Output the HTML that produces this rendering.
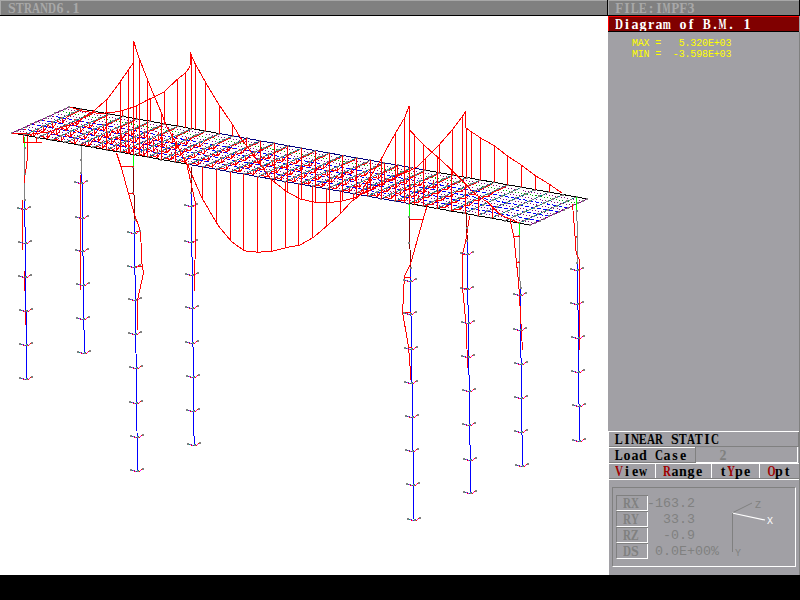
<!DOCTYPE html>
<html><head><meta charset="utf-8">
<style>
html,body{margin:0;padding:0;width:800px;height:600px;overflow:hidden;background:#fff;}
body{position:relative;font-family:"Liberation Mono",monospace;}
.a{position:absolute;box-sizing:border-box;}
.t{position:absolute;white-space:pre;line-height:1;height:16px;}
.t span{display:inline-flex;justify-content:center;width:8px;}
.t b{display:inline-block;font-weight:inherit;}
.s{font-family:"Liberation Serif",serif;font-weight:bold;font-size:14px;}
.m{font-family:"Liberation Mono",monospace;font-size:13.33px;}
svg{position:absolute;left:0;top:0;}
</style></head><body>
<!-- title bar -->
<div class="a" style="left:0;top:0;width:607px;height:15px;background:#808080;border-top:1px solid #a8a8a8;border-left:1px solid #a8a8a8;"></div>
<div class="a" style="left:607px;top:0;width:1px;height:16px;background:#000;"></div>
<div class="a" style="left:608px;top:0;width:191px;height:15px;background:#808080;border-top:1px solid #a8a8a8;border-left:1px solid #a8a8a8;"></div>
<div class="a" style="left:799px;top:0;width:1px;height:32px;background:#000;"></div>
<div class="a" style="left:0;top:15px;width:800px;height:1px;background:#000;"></div>
<!-- right panel -->
<div class="a" style="left:608px;top:16px;width:192px;height:559px;background:#a1a0a5;"></div>
<div class="a" style="left:608px;top:16px;width:191px;height:16px;background:#800000;border-top:1px solid #ff0000;border-left:1px solid #ff0000;border-bottom:1px solid #000;"></div>
<div class="a" style="left:799px;top:32px;width:1px;height:543px;background:#808080;"></div>
<!-- buttons -->
<div class="a" style="left:608px;top:431px;width:191px;height:1px;background:#fff;"></div>
<div class="a" style="left:608px;top:431px;width:1px;height:144px;background:#fff;"></div>
<div class="a" style="left:609px;top:446px;width:190px;height:1px;background:#808080;"></div>
<div class="a" style="left:798px;top:432px;width:1px;height:15px;background:#808080;"></div>
<div class="a" style="left:609px;top:447px;width:86px;height:1px;background:#fff;"></div>
<div class="a" style="left:695px;top:447px;width:1px;height:16px;background:#808080;"></div>
<div class="a" style="left:609px;top:462px;width:86px;height:1px;background:#808080;"></div>
<div class="a" style="left:696px;top:462px;width:102px;height:1px;background:#fff;"></div>
<div class="a" style="left:797px;top:447px;width:1px;height:16px;background:#fff;"></div>
<div class="a" style="left:609px;top:463px;width:190px;height:1px;background:#fff;"></div>
<div class="a" style="left:655px;top:464px;width:1px;height:14px;background:#fff;"></div>
<div class="a" style="left:711px;top:464px;width:1px;height:14px;background:#fff;"></div>
<div class="a" style="left:759px;top:464px;width:1px;height:14px;background:#fff;"></div>
<div class="a" style="left:609px;top:478px;width:190px;height:1px;background:#808080;"></div>
<div class="a" style="left:609px;top:479px;width:190px;height:1px;background:#fff;"></div>
<!-- lower frame -->
<div class="a" style="left:612px;top:487px;width:184px;height:80px;border-top:1px solid #808080;border-left:1px solid #808080;border-right:1px solid #fff;border-bottom:1px solid #fff;"></div>
<div class="a" style="left:616px;top:495px;width:32px;height:64px;border-right:1px solid #fff;"></div>
<div class="a" style="left:616px;top:495px;width:32px;height:16px;border-top:1px solid #808080;border-left:1px solid #808080;border-bottom:1px solid #fff;"></div>
<div class="a" style="left:616px;top:511px;width:32px;height:16px;border-top:1px solid #808080;border-left:1px solid #808080;border-bottom:1px solid #fff;"></div>
<div class="a" style="left:616px;top:527px;width:32px;height:16px;border-top:1px solid #808080;border-left:1px solid #808080;border-bottom:1px solid #fff;"></div>
<div class="a" style="left:616px;top:543px;width:32px;height:16px;border-top:1px solid #808080;border-left:1px solid #808080;border-bottom:1px solid #fff;"></div>
<svg width="800" height="600" style="pointer-events:none">
<line x1="732" y1="513" x2="752" y2="503" stroke="#808080" stroke-width="1"/>
<line x1="732" y1="513" x2="765" y2="520" stroke="#fff" stroke-width="1.2"/>
<line x1="732.5" y1="513" x2="732.5" y2="552" stroke="#808080" stroke-width="1"/>
</svg>
<div class="t s" style="left:8px;top:2px;color:#a8a8a8;"><span>S</span><span><b style="transform:scaleX(0.856)">T</b></span><span><b style="transform:scaleX(0.791)">R</b></span><span><b style="transform:scaleX(0.791)">A</b></span><span><b style="transform:scaleX(0.791)">N</b></span><span><b style="transform:scaleX(0.791)">D</b></span><span>6</span><span>.</span><span>1</span></div>
<div class="t s" style="left:615px;top:2px;color:#a8a8a8;"><span><b style="transform:scaleX(0.936)">F</b></span><span>I</span><span><b style="transform:scaleX(0.856)">L</b></span><span><b style="transform:scaleX(0.856)">E</b></span><span>:</span><span>I</span><span><b style="transform:scaleX(0.605)">M</b></span><span><b style="transform:scaleX(0.936)">P</b></span><span><b style="transform:scaleX(0.936)">F</b></span><span>3</span></div>
<div class="t s" style="left:615px;top:18px;color:#ffffff;"><span><b style="transform:scaleX(0.791)">D</b></span><span>i</span><span>a</span><span>g</span><span>r</span><span>a</span><span><b style="transform:scaleX(0.686)">m</b></span><span>&nbsp;</span><span>o</span><span>f</span><span>&nbsp;</span><span><b style="transform:scaleX(0.856)">B</b></span><span>.</span><span><b style="transform:scaleX(0.605)">M</b></span><span>.</span><span>&nbsp;</span><span>1</span></div>
<div class="t m" style="left:632px;top:39px;color:#ffff00;font-size:10px;"><span style="width:5.85px;">M</span><span style="width:5.85px;">A</span><span style="width:5.85px;">X</span><span style="width:5.85px;">&nbsp;</span><span style="width:5.85px;">=</span><span style="width:5.85px;">&nbsp;</span><span style="width:5.85px;">&nbsp;</span><span style="width:5.85px;">&nbsp;</span><span style="width:5.85px;">5</span><span style="width:5.85px;">.</span><span style="width:5.85px;">3</span><span style="width:5.85px;">2</span><span style="width:5.85px;">0</span><span style="width:5.85px;">E</span><span style="width:5.85px;">+</span><span style="width:5.85px;">0</span><span style="width:5.85px;">3</span></div>
<div class="t m" style="left:632px;top:50px;color:#ffff00;font-size:10px;"><span style="width:5.85px;">M</span><span style="width:5.85px;">I</span><span style="width:5.85px;">N</span><span style="width:5.85px;">&nbsp;</span><span style="width:5.85px;">=</span><span style="width:5.85px;">&nbsp;</span><span style="width:5.85px;">&nbsp;</span><span style="width:5.85px;">-</span><span style="width:5.85px;">3</span><span style="width:5.85px;">.</span><span style="width:5.85px;">5</span><span style="width:5.85px;">9</span><span style="width:5.85px;">8</span><span style="width:5.85px;">E</span><span style="width:5.85px;">+</span><span style="width:5.85px;">0</span><span style="width:5.85px;">3</span></div>
<div class="t s" style="left:615px;top:433px;color:#000000;"><span><b style="transform:scaleX(0.856)">L</b></span><span>I</span><span><b style="transform:scaleX(0.791)">N</b></span><span><b style="transform:scaleX(0.856)">E</b></span><span><b style="transform:scaleX(0.791)">A</b></span><span><b style="transform:scaleX(0.791)">R</b></span><span>&nbsp;</span><span>S</span><span><b style="transform:scaleX(0.856)">T</b></span><span><b style="transform:scaleX(0.791)">A</b></span><span><b style="transform:scaleX(0.856)">T</b></span><span>I</span><span><b style="transform:scaleX(0.791)">C</b></span></div>
<div class="t s" style="left:615px;top:449px;color:#000000;"><span><b style="transform:scaleX(0.856)">L</b></span><span>o</span><span>a</span><span>d</span><span>&nbsp;</span><span><b style="transform:scaleX(0.791)">C</b></span><span>a</span><span>s</span><span>e</span></div>
<div class="t s" style="left:719px;top:449px;color:#808080;"><span>2</span></div>
<div class="t s" style="left:615px;top:465px;color:#000000;"><span style="color:#a00000;"><b style="transform:scaleX(0.791)">V</b></span><span>i</span><span>e</span><span><b style="transform:scaleX(0.791)">w</b></span></div>
<div class="t s" style="left:663px;top:465px;color:#000000;"><span style="color:#a00000;"><b style="transform:scaleX(0.791)">R</b></span><span>a</span><span>n</span><span>g</span><span>e</span></div>
<div class="t s" style="left:719px;top:465px;color:#000000;"><span>t</span><span style="color:#a00000;"><b style="transform:scaleX(0.791)">Y</b></span><span>p</span><span>e</span></div>
<div class="t s" style="left:767px;top:465px;color:#000000;"><span style="color:#a00000;"><b style="transform:scaleX(0.735)">O</b></span><span>p</span><span>t</span></div>
<div class="t s" style="left:623px;top:497px;color:#808080;"><span><b style="transform:scaleX(0.791)">R</b></span><span><b style="transform:scaleX(0.791)">X</b></span></div>
<div class="t s" style="left:623px;top:513px;color:#808080;"><span><b style="transform:scaleX(0.791)">R</b></span><span><b style="transform:scaleX(0.791)">Y</b></span></div>
<div class="t s" style="left:623px;top:529px;color:#808080;"><span><b style="transform:scaleX(0.791)">R</b></span><span><b style="transform:scaleX(0.856)">Z</b></span></div>
<div class="t s" style="left:623px;top:545px;color:#808080;"><span><b style="transform:scaleX(0.791)">D</b></span><span>S</span></div>
<div class="t m" style="left:647px;top:497px;color:#808080;"><span>-</span><span>1</span><span>6</span><span>3</span><span>.</span><span>2</span></div>
<div class="t m" style="left:647px;top:513px;color:#808080;"><span>&nbsp;</span><span>&nbsp;</span><span>3</span><span>3</span><span>.</span><span>3</span></div>
<div class="t m" style="left:647px;top:529px;color:#808080;"><span>&nbsp;</span><span>&nbsp;</span><span>-</span><span>0</span><span>.</span><span>9</span></div>
<div class="t m" style="left:655px;top:545px;color:#808080;"><span>0</span><span>.</span><span>0</span><span>E</span><span>+</span><span>0</span><span>0</span><span>%</span></div>
<div class="t m" style="left:755px;top:501px;font-size:10px;color:#808080">Z</div>
<div class="t m" style="left:767px;top:517px;font-size:10px;color:#ffffff">X</div>
<div class="t m" style="left:735px;top:549px;font-size:10px;color:#808080">Y</div>
<div class="a" style="left:608px;top:31px;width:191px;height:1px;background:#000;"></div>
<!-- bottom black -->
<div class="a" style="left:0;top:575px;width:800px;height:25px;background:#000;"></div>
<!-- drawing -->
<svg width="607" height="575" viewBox="0 0 607 575" style="left:0;top:0;" shape-rendering="crispEdges">
<line x1="16.8" y1="130.8" x2="534.8" y2="222.8" stroke="#800080" stroke-width="1" stroke-dasharray="1 2"/>
<line x1="26.4" y1="126.5" x2="544.4" y2="218.5" stroke="#800080" stroke-width="1" stroke-dasharray="1 2"/>
<line x1="36.0" y1="122.2" x2="554.0" y2="214.2" stroke="#800080" stroke-width="1" stroke-dasharray="1 2"/>
<line x1="45.5" y1="117.8" x2="563.5" y2="209.8" stroke="#800080" stroke-width="1" stroke-dasharray="1 2"/>
<line x1="55.1" y1="113.5" x2="573.1" y2="205.5" stroke="#800080" stroke-width="1" stroke-dasharray="1 2"/>
<line x1="59.9" y1="111.3" x2="577.9" y2="203.3" stroke="#00a000" stroke-width="1" stroke-dasharray="1 2"/>
<line x1="64.7" y1="109.2" x2="582.7" y2="201.2" stroke="#800080" stroke-width="1" stroke-dasharray="1 2"/>
<line x1="33.6" y1="130.8" x2="33.6" y2="136.8" stroke="#ff0000" stroke-width="1" />
<line x1="43.2" y1="126.5" x2="43.2" y2="132.5" stroke="#ff0000" stroke-width="1" />
<line x1="52.8" y1="122.1" x2="52.8" y2="128.1" stroke="#ff0000" stroke-width="1" />
<line x1="62.3" y1="117.8" x2="62.3" y2="123.8" stroke="#ff0000" stroke-width="1" />
<polyline points="24.0,135.1 28.8,134.0 33.6,136.8 38.4,129.6 43.2,132.5 48.0,125.3 52.8,128.1 57.5,121.0 62.3,123.8 67.1,116.6 71.9,114.5 76.7,112.3 81.5,109.1" fill="none" stroke="#ff0000" stroke-width="1" />
<line x1="47.3" y1="133.2" x2="47.3" y2="139.2" stroke="#ff0000" stroke-width="1" />
<line x1="56.9" y1="128.9" x2="56.9" y2="134.9" stroke="#ff0000" stroke-width="1" />
<line x1="66.5" y1="124.6" x2="66.5" y2="130.6" stroke="#ff0000" stroke-width="1" />
<line x1="76.1" y1="120.2" x2="76.1" y2="126.2" stroke="#ff0000" stroke-width="1" />
<polyline points="37.8,137.6 42.5,136.4 47.3,139.2 52.1,132.1 56.9,134.9 61.7,127.7 66.5,130.6 71.3,123.4 76.1,126.2 80.9,119.1 85.7,116.9 90.5,114.7 95.2,111.6" fill="none" stroke="#ff0000" stroke-width="1" />
<line x1="61.1" y1="135.7" x2="61.1" y2="141.7" stroke="#ff0000" stroke-width="1" />
<line x1="70.7" y1="131.3" x2="70.7" y2="137.3" stroke="#ff0000" stroke-width="1" />
<line x1="80.2" y1="127.0" x2="80.2" y2="133.0" stroke="#ff0000" stroke-width="1" />
<line x1="89.8" y1="122.7" x2="89.8" y2="128.7" stroke="#ff0000" stroke-width="1" />
<polyline points="51.5,140.0 56.3,138.8 61.1,141.7 65.9,134.5 70.7,137.3 75.5,130.2 80.2,133.0 85.0,125.8 89.8,128.7 94.6,121.5 99.4,119.3 104.2,117.2 109.0,114.0" fill="none" stroke="#ff0000" stroke-width="1" />
<line x1="74.8" y1="138.1" x2="74.8" y2="144.1" stroke="#ff0000" stroke-width="1" />
<line x1="84.4" y1="133.8" x2="84.4" y2="139.8" stroke="#ff0000" stroke-width="1" />
<line x1="94.0" y1="129.5" x2="94.0" y2="135.5" stroke="#ff0000" stroke-width="1" />
<line x1="103.6" y1="125.1" x2="103.6" y2="131.1" stroke="#ff0000" stroke-width="1" />
<polyline points="65.2,142.5 70.0,141.3 74.8,144.1 79.6,137.0 84.4,139.8 89.2,132.6 94.0,135.5 98.8,128.3 103.6,131.1 108.4,124.0 113.2,121.8 118.0,119.6 122.8,116.5" fill="none" stroke="#ff0000" stroke-width="1" />
<line x1="88.6" y1="140.6" x2="88.6" y2="146.6" stroke="#ff0000" stroke-width="1" />
<line x1="98.2" y1="136.2" x2="98.2" y2="142.2" stroke="#ff0000" stroke-width="1" />
<line x1="107.8" y1="131.9" x2="107.8" y2="137.9" stroke="#ff0000" stroke-width="1" />
<line x1="117.3" y1="127.6" x2="117.3" y2="133.6" stroke="#ff0000" stroke-width="1" />
<polyline points="79.0,144.9 83.8,143.7 88.6,146.6 93.4,139.4 98.2,142.2 103.0,135.1 107.8,137.9 112.5,130.7 117.3,133.6 122.1,126.4 126.9,124.2 131.7,122.1 136.5,118.9" fill="none" stroke="#ff0000" stroke-width="1" />
<line x1="102.3" y1="143.0" x2="102.3" y2="149.0" stroke="#ff0000" stroke-width="1" />
<line x1="111.9" y1="138.7" x2="111.9" y2="144.7" stroke="#ff0000" stroke-width="1" />
<line x1="121.5" y1="134.3" x2="121.5" y2="140.3" stroke="#ff0000" stroke-width="1" />
<line x1="131.1" y1="130.0" x2="131.1" y2="136.0" stroke="#ff0000" stroke-width="1" />
<polyline points="92.8,147.3 97.5,146.2 102.3,149.0 107.1,141.8 111.9,144.7 116.7,137.5 121.5,140.3 126.3,133.2 131.1,136.0 135.9,128.8 140.7,126.7 145.5,124.5 150.2,121.3" fill="none" stroke="#ff0000" stroke-width="1" />
<line x1="116.1" y1="145.5" x2="116.1" y2="151.5" stroke="#ff0000" stroke-width="1" />
<line x1="125.7" y1="141.1" x2="125.7" y2="147.1" stroke="#ff0000" stroke-width="1" />
<line x1="135.2" y1="136.8" x2="135.2" y2="142.8" stroke="#ff0000" stroke-width="1" />
<line x1="144.8" y1="132.5" x2="144.8" y2="138.5" stroke="#ff0000" stroke-width="1" />
<polyline points="106.5,149.8 111.3,148.6 116.1,151.5 120.9,144.3 125.7,147.1 130.5,140.0 135.2,142.8 140.0,135.6 144.8,138.5 149.6,131.3 154.4,129.1 159.2,127.0 164.0,123.8" fill="none" stroke="#ff0000" stroke-width="1" />
<line x1="129.8" y1="147.9" x2="129.8" y2="153.9" stroke="#ff0000" stroke-width="1" />
<line x1="139.4" y1="143.6" x2="139.4" y2="149.6" stroke="#ff0000" stroke-width="1" />
<line x1="149.0" y1="139.2" x2="149.0" y2="145.2" stroke="#ff0000" stroke-width="1" />
<line x1="158.6" y1="134.9" x2="158.6" y2="140.9" stroke="#ff0000" stroke-width="1" />
<polyline points="120.2,152.2 125.0,151.1 129.8,153.9 134.6,146.7 139.4,149.6 144.2,142.4 149.0,145.2 153.8,138.1 158.6,140.9 163.4,133.7 168.2,131.6 173.0,129.4 177.8,126.2" fill="none" stroke="#ff0000" stroke-width="1" />
<line x1="143.6" y1="150.3" x2="143.6" y2="156.3" stroke="#ff0000" stroke-width="1" />
<line x1="153.2" y1="146.0" x2="153.2" y2="152.0" stroke="#ff0000" stroke-width="1" />
<line x1="162.8" y1="141.7" x2="162.8" y2="147.7" stroke="#ff0000" stroke-width="1" />
<line x1="172.3" y1="137.3" x2="172.3" y2="143.3" stroke="#ff0000" stroke-width="1" />
<polyline points="134.0,154.7 138.8,153.5 143.6,156.3 148.4,149.2 153.2,152.0 158.0,144.8 162.8,147.7 167.5,140.5 172.3,143.3 177.1,136.2 181.9,134.0 186.7,131.8 191.5,128.7" fill="none" stroke="#ff0000" stroke-width="1" />
<line x1="157.3" y1="152.8" x2="157.3" y2="157.3" stroke="#ff0000" stroke-width="1" />
<line x1="166.9" y1="148.4" x2="166.9" y2="152.9" stroke="#ff0000" stroke-width="1" />
<line x1="176.5" y1="144.1" x2="176.5" y2="148.6" stroke="#ff0000" stroke-width="1" />
<line x1="186.1" y1="139.8" x2="186.1" y2="144.3" stroke="#ff0000" stroke-width="1" />
<polyline points="147.8,157.1 152.5,155.9 157.3,157.3 162.1,151.6 166.9,152.9 171.7,147.3 176.5,148.6 181.3,142.9 186.1,144.3 190.9,138.6 195.7,136.4 200.5,134.3 205.2,131.1" fill="none" stroke="#ff0000" stroke-width="1" />
<line x1="171.1" y1="155.2" x2="171.1" y2="159.7" stroke="#ff0000" stroke-width="1" />
<line x1="180.7" y1="150.9" x2="180.7" y2="155.4" stroke="#ff0000" stroke-width="1" />
<line x1="190.2" y1="146.6" x2="190.2" y2="151.1" stroke="#ff0000" stroke-width="1" />
<line x1="199.8" y1="142.2" x2="199.8" y2="146.7" stroke="#ff0000" stroke-width="1" />
<polyline points="161.5,159.6 166.3,158.4 171.1,159.7 175.9,154.1 180.7,155.4 185.5,149.7 190.2,151.1 195.0,145.4 199.8,146.7 204.6,141.1 209.4,138.9 214.2,136.7 219.0,133.6" fill="none" stroke="#ff0000" stroke-width="1" />
<line x1="184.8" y1="157.7" x2="184.8" y2="162.2" stroke="#ff0000" stroke-width="1" />
<line x1="194.4" y1="153.3" x2="194.4" y2="157.8" stroke="#ff0000" stroke-width="1" />
<line x1="204.0" y1="149.0" x2="204.0" y2="153.5" stroke="#ff0000" stroke-width="1" />
<line x1="213.6" y1="144.7" x2="213.6" y2="149.2" stroke="#ff0000" stroke-width="1" />
<polyline points="175.2,162.0 180.0,160.8 184.8,162.2 189.6,156.5 194.4,157.8 199.2,152.2 204.0,153.5 208.8,147.8 213.6,149.2 218.4,143.5 223.2,141.3 228.0,139.2 232.8,136.0" fill="none" stroke="#ff0000" stroke-width="1" />
<line x1="198.6" y1="160.1" x2="198.6" y2="164.6" stroke="#ff0000" stroke-width="1" />
<line x1="208.2" y1="155.8" x2="208.2" y2="160.3" stroke="#ff0000" stroke-width="1" />
<line x1="217.8" y1="151.4" x2="217.8" y2="155.9" stroke="#ff0000" stroke-width="1" />
<line x1="227.3" y1="147.1" x2="227.3" y2="151.6" stroke="#ff0000" stroke-width="1" />
<polyline points="189.0,164.4 193.8,163.3 198.6,164.6 203.4,158.9 208.2,160.3 213.0,154.6 217.8,155.9 222.5,150.3 227.3,151.6 232.1,145.9 236.9,143.8 241.7,141.6 246.5,138.4" fill="none" stroke="#ff0000" stroke-width="1" />
<line x1="212.3" y1="162.5" x2="212.3" y2="167.0" stroke="#ff0000" stroke-width="1" />
<line x1="221.9" y1="158.2" x2="221.9" y2="162.7" stroke="#ff0000" stroke-width="1" />
<line x1="231.5" y1="153.9" x2="231.5" y2="158.4" stroke="#ff0000" stroke-width="1" />
<line x1="241.1" y1="149.5" x2="241.1" y2="154.0" stroke="#ff0000" stroke-width="1" />
<polyline points="202.8,166.9 207.5,165.7 212.3,167.0 217.1,161.4 221.9,162.7 226.7,157.0 231.5,158.4 236.3,152.7 241.1,154.0 245.9,148.4 250.7,146.2 255.5,144.0 260.2,140.9" fill="none" stroke="#ff0000" stroke-width="1" />
<line x1="226.1" y1="165.0" x2="226.1" y2="169.5" stroke="#ff0000" stroke-width="1" />
<line x1="235.7" y1="160.7" x2="235.7" y2="165.2" stroke="#ff0000" stroke-width="1" />
<line x1="245.2" y1="156.3" x2="245.2" y2="160.8" stroke="#ff0000" stroke-width="1" />
<line x1="254.8" y1="152.0" x2="254.8" y2="156.5" stroke="#ff0000" stroke-width="1" />
<polyline points="216.5,169.3 221.3,168.2 226.1,169.5 230.9,163.8 235.7,165.2 240.5,159.5 245.2,160.8 250.0,155.2 254.8,156.5 259.6,150.8 264.4,148.7 269.2,146.5 274.0,143.3" fill="none" stroke="#ff0000" stroke-width="1" />
<line x1="239.8" y1="167.4" x2="239.8" y2="171.9" stroke="#ff0000" stroke-width="1" />
<line x1="249.4" y1="163.1" x2="249.4" y2="167.6" stroke="#ff0000" stroke-width="1" />
<line x1="259.0" y1="158.8" x2="259.0" y2="163.3" stroke="#ff0000" stroke-width="1" />
<line x1="268.6" y1="154.4" x2="268.6" y2="158.9" stroke="#ff0000" stroke-width="1" />
<polyline points="230.2,171.8 235.0,170.6 239.8,171.9 244.6,166.3 249.4,167.6 254.2,161.9 259.0,163.3 263.8,157.6 268.6,158.9 273.4,153.3 278.2,151.1 283.0,148.9 287.8,145.8" fill="none" stroke="#ff0000" stroke-width="1" />
<line x1="253.6" y1="169.9" x2="253.6" y2="174.4" stroke="#ff0000" stroke-width="1" />
<line x1="263.2" y1="165.5" x2="263.2" y2="170.0" stroke="#ff0000" stroke-width="1" />
<line x1="272.8" y1="161.2" x2="272.8" y2="165.7" stroke="#ff0000" stroke-width="1" />
<line x1="282.3" y1="156.9" x2="282.3" y2="161.4" stroke="#ff0000" stroke-width="1" />
<polyline points="244.0,174.2 248.8,173.0 253.6,174.4 258.4,168.7 263.2,170.0 268.0,164.4 272.8,165.7 277.5,160.0 282.3,161.4 287.1,155.7 291.9,153.5 296.7,151.4 301.5,148.2" fill="none" stroke="#ff0000" stroke-width="1" />
<line x1="267.3" y1="172.3" x2="267.3" y2="176.8" stroke="#ff0000" stroke-width="1" />
<line x1="276.9" y1="168.0" x2="276.9" y2="172.5" stroke="#ff0000" stroke-width="1" />
<line x1="286.5" y1="163.6" x2="286.5" y2="168.1" stroke="#ff0000" stroke-width="1" />
<line x1="296.1" y1="159.3" x2="296.1" y2="163.8" stroke="#ff0000" stroke-width="1" />
<polyline points="257.8,176.6 262.5,175.5 267.3,176.8 272.1,171.1 276.9,172.5 281.7,166.8 286.5,168.1 291.3,162.5 296.1,163.8 300.9,158.1 305.7,156.0 310.5,153.8 315.2,150.6" fill="none" stroke="#ff0000" stroke-width="1" />
<line x1="281.1" y1="174.8" x2="281.1" y2="179.3" stroke="#ff0000" stroke-width="1" />
<line x1="290.7" y1="170.4" x2="290.7" y2="174.9" stroke="#ff0000" stroke-width="1" />
<line x1="300.2" y1="166.1" x2="300.2" y2="170.6" stroke="#ff0000" stroke-width="1" />
<line x1="309.8" y1="161.8" x2="309.8" y2="166.3" stroke="#ff0000" stroke-width="1" />
<polyline points="271.5,179.1 276.3,177.9 281.1,179.3 285.9,173.6 290.7,174.9 295.5,169.3 300.2,170.6 305.0,164.9 309.8,166.3 314.6,160.6 319.4,158.4 324.2,156.3 329.0,153.1" fill="none" stroke="#ff0000" stroke-width="1" />
<line x1="294.8" y1="177.2" x2="294.8" y2="181.7" stroke="#ff0000" stroke-width="1" />
<line x1="304.4" y1="172.9" x2="304.4" y2="177.4" stroke="#ff0000" stroke-width="1" />
<line x1="314.0" y1="168.5" x2="314.0" y2="173.0" stroke="#ff0000" stroke-width="1" />
<line x1="323.6" y1="164.2" x2="323.6" y2="168.7" stroke="#ff0000" stroke-width="1" />
<polyline points="285.2,181.5 290.0,180.4 294.8,181.7 299.6,176.0 304.4,177.4 309.2,171.7 314.0,173.0 318.8,167.4 323.6,168.7 328.4,163.0 333.2,160.9 338.0,158.7 342.8,155.5" fill="none" stroke="#ff0000" stroke-width="1" />
<line x1="308.6" y1="179.6" x2="308.6" y2="184.1" stroke="#ff0000" stroke-width="1" />
<line x1="318.2" y1="175.3" x2="318.2" y2="179.8" stroke="#ff0000" stroke-width="1" />
<line x1="327.8" y1="171.0" x2="327.8" y2="175.5" stroke="#ff0000" stroke-width="1" />
<line x1="337.3" y1="166.6" x2="337.3" y2="171.1" stroke="#ff0000" stroke-width="1" />
<polyline points="299.0,184.0 303.8,182.8 308.6,184.1 313.4,178.5 318.2,179.8 323.0,174.1 327.8,175.5 332.5,169.8 337.3,171.1 342.1,165.5 346.9,163.3 351.7,161.1 356.5,158.0" fill="none" stroke="#ff0000" stroke-width="1" />
<line x1="322.3" y1="182.1" x2="322.3" y2="186.6" stroke="#ff0000" stroke-width="1" />
<line x1="331.9" y1="177.7" x2="331.9" y2="182.2" stroke="#ff0000" stroke-width="1" />
<line x1="341.5" y1="173.4" x2="341.5" y2="177.9" stroke="#ff0000" stroke-width="1" />
<line x1="351.1" y1="169.1" x2="351.1" y2="173.6" stroke="#ff0000" stroke-width="1" />
<polyline points="312.8,186.4 317.5,185.2 322.3,186.6 327.1,180.9 331.9,182.2 336.7,176.6 341.5,177.9 346.3,172.2 351.1,173.6 355.9,167.9 360.7,165.7 365.5,163.6 370.2,160.4" fill="none" stroke="#ff0000" stroke-width="1" />
<line x1="336.1" y1="184.5" x2="336.1" y2="189.0" stroke="#ff0000" stroke-width="1" />
<line x1="345.7" y1="180.2" x2="345.7" y2="184.7" stroke="#ff0000" stroke-width="1" />
<line x1="355.2" y1="175.9" x2="355.2" y2="180.4" stroke="#ff0000" stroke-width="1" />
<line x1="364.8" y1="171.5" x2="364.8" y2="176.0" stroke="#ff0000" stroke-width="1" />
<polyline points="326.5,188.9 331.3,187.7 336.1,189.0 340.9,183.4 345.7,184.7 350.5,179.0 355.2,180.4 360.0,174.7 364.8,176.0 369.6,170.4 374.4,168.2 379.2,166.0 384.0,162.9" fill="none" stroke="#ff0000" stroke-width="1" />
<line x1="349.8" y1="187.0" x2="349.8" y2="191.5" stroke="#ff0000" stroke-width="1" />
<line x1="359.4" y1="182.6" x2="359.4" y2="187.1" stroke="#ff0000" stroke-width="1" />
<line x1="369.0" y1="178.3" x2="369.0" y2="182.8" stroke="#ff0000" stroke-width="1" />
<line x1="378.6" y1="174.0" x2="378.6" y2="178.5" stroke="#ff0000" stroke-width="1" />
<polyline points="340.2,191.3 345.0,190.1 349.8,191.5 354.6,185.8 359.4,187.1 364.2,181.5 369.0,182.8 373.8,177.1 378.6,178.5 383.4,172.8 388.2,170.6 393.0,168.5 397.8,165.3" fill="none" stroke="#ff0000" stroke-width="1" />
<line x1="363.6" y1="189.4" x2="363.6" y2="193.9" stroke="#ff0000" stroke-width="1" />
<line x1="373.2" y1="185.1" x2="373.2" y2="189.6" stroke="#ff0000" stroke-width="1" />
<line x1="382.8" y1="180.7" x2="382.8" y2="185.2" stroke="#ff0000" stroke-width="1" />
<line x1="392.3" y1="176.4" x2="392.3" y2="180.9" stroke="#ff0000" stroke-width="1" />
<polyline points="354.0,193.7 358.8,192.6 363.6,193.9 368.4,188.2 373.2,189.6 378.0,183.9 382.8,185.2 387.5,179.6 392.3,180.9 397.1,175.2 401.9,173.1 406.7,170.9 411.5,167.7" fill="none" stroke="#ff0000" stroke-width="1" />
<line x1="377.3" y1="191.9" x2="377.3" y2="196.4" stroke="#ff0000" stroke-width="1" />
<line x1="386.9" y1="187.5" x2="386.9" y2="192.0" stroke="#ff0000" stroke-width="1" />
<line x1="396.5" y1="183.2" x2="396.5" y2="187.7" stroke="#ff0000" stroke-width="1" />
<line x1="406.1" y1="178.9" x2="406.1" y2="183.4" stroke="#ff0000" stroke-width="1" />
<polyline points="367.8,196.2 372.5,195.0 377.3,196.4 382.1,190.7 386.9,192.0 391.7,186.4 396.5,187.7 401.3,182.0 406.1,183.4 410.9,177.7 415.7,175.5 420.5,173.4 425.2,170.2" fill="none" stroke="#ff0000" stroke-width="1" />
<line x1="391.1" y1="194.3" x2="391.1" y2="198.8" stroke="#ff0000" stroke-width="1" />
<line x1="400.7" y1="190.0" x2="400.7" y2="194.5" stroke="#ff0000" stroke-width="1" />
<line x1="410.2" y1="185.6" x2="410.2" y2="190.1" stroke="#ff0000" stroke-width="1" />
<line x1="419.8" y1="181.3" x2="419.8" y2="185.8" stroke="#ff0000" stroke-width="1" />
<polyline points="381.5,198.6 386.3,197.5 391.1,198.8 395.9,193.1 400.7,194.5 405.5,188.8 410.2,190.1 415.0,184.5 419.8,185.8 424.6,180.1 429.4,178.0 434.2,175.8 439.0,172.6" fill="none" stroke="#ff0000" stroke-width="1" />
<line x1="404.8" y1="196.7" x2="404.8" y2="201.2" stroke="#ff0000" stroke-width="1" />
<line x1="414.4" y1="192.4" x2="414.4" y2="196.9" stroke="#ff0000" stroke-width="1" />
<line x1="424.0" y1="188.1" x2="424.0" y2="192.6" stroke="#ff0000" stroke-width="1" />
<line x1="433.6" y1="183.7" x2="433.6" y2="188.2" stroke="#ff0000" stroke-width="1" />
<polyline points="395.2,201.1 400.0,199.9 404.8,201.2 409.6,195.6 414.4,196.9 419.2,191.2 424.0,192.6 428.8,186.9 433.6,188.2 438.4,182.6 443.2,180.4 448.0,178.2 452.8,175.1" fill="none" stroke="#ff0000" stroke-width="1" />
<line x1="418.6" y1="199.2" x2="418.6" y2="202.2" stroke="#ff0000" stroke-width="1" />
<line x1="428.2" y1="194.8" x2="428.2" y2="197.8" stroke="#ff0000" stroke-width="1" />
<line x1="437.8" y1="190.5" x2="437.8" y2="193.5" stroke="#ff0000" stroke-width="1" />
<line x1="447.3" y1="186.2" x2="447.3" y2="189.2" stroke="#ff0000" stroke-width="1" />
<polyline points="409.0,203.5 413.8,202.3 418.6,202.2 423.4,198.0 428.2,197.8 433.0,193.7 437.8,193.5 442.5,189.3 447.3,189.2 452.1,185.0 456.9,182.8 461.7,180.7 466.5,177.5" fill="none" stroke="#ff0000" stroke-width="1" />
<line x1="432.3" y1="201.6" x2="432.3" y2="204.6" stroke="#ff0000" stroke-width="1" />
<line x1="441.9" y1="197.3" x2="441.9" y2="200.3" stroke="#ff0000" stroke-width="1" />
<line x1="451.5" y1="193.0" x2="451.5" y2="196.0" stroke="#ff0000" stroke-width="1" />
<line x1="461.1" y1="188.6" x2="461.1" y2="191.6" stroke="#ff0000" stroke-width="1" />
<polyline points="422.8,206.0 427.5,204.8 432.3,204.6 437.1,200.5 441.9,200.3 446.7,196.1 451.5,196.0 456.3,191.8 461.1,191.6 465.9,187.5 470.7,185.3 475.5,183.1 480.2,180.0" fill="none" stroke="#ff0000" stroke-width="1" />
<line x1="446.1" y1="204.1" x2="446.1" y2="207.1" stroke="#ff0000" stroke-width="1" />
<line x1="455.7" y1="199.7" x2="455.7" y2="202.7" stroke="#ff0000" stroke-width="1" />
<line x1="465.2" y1="195.4" x2="465.2" y2="198.4" stroke="#ff0000" stroke-width="1" />
<line x1="474.8" y1="191.1" x2="474.8" y2="194.1" stroke="#ff0000" stroke-width="1" />
<polyline points="436.5,208.4 441.3,207.2 446.1,207.1 450.9,202.9 455.7,202.7 460.5,198.6 465.2,198.4 470.0,194.2 474.8,194.1 479.6,189.9 484.4,187.7 489.2,185.6 494.0,182.4" fill="none" stroke="#ff0000" stroke-width="1" />
<line x1="459.8" y1="206.5" x2="459.8" y2="209.5" stroke="#ff0000" stroke-width="1" />
<line x1="469.4" y1="202.2" x2="469.4" y2="205.2" stroke="#ff0000" stroke-width="1" />
<line x1="479.0" y1="197.8" x2="479.0" y2="200.8" stroke="#ff0000" stroke-width="1" />
<line x1="488.6" y1="193.5" x2="488.6" y2="196.5" stroke="#ff0000" stroke-width="1" />
<polyline points="450.2,210.8 455.0,209.7 459.8,209.5 464.6,205.3 469.4,205.2 474.2,201.0 479.0,200.8 483.8,196.7 488.6,196.5 493.4,192.3 498.2,190.2 503.0,188.0 507.8,184.8" fill="none" stroke="#ff0000" stroke-width="1" />
<line x1="21.6" y1="128.7" x2="539.6" y2="220.7" stroke="#0000ff" stroke-width="1" stroke-dasharray="4 2"/>
<line x1="21.6" y1="128.7" x2="418.6" y2="199.2" stroke="#ff0000" stroke-width="1" stroke-dasharray="1 6" stroke-dashoffset="-3"/>
<line x1="31.2" y1="124.3" x2="549.2" y2="216.3" stroke="#0000ff" stroke-width="1" stroke-dasharray="4 2"/>
<line x1="31.2" y1="124.3" x2="428.2" y2="194.8" stroke="#ff0000" stroke-width="1" stroke-dasharray="1 6" stroke-dashoffset="-3"/>
<line x1="40.8" y1="120.0" x2="558.8" y2="212.0" stroke="#0000ff" stroke-width="1" stroke-dasharray="4 2"/>
<line x1="40.8" y1="120.0" x2="437.8" y2="190.5" stroke="#ff0000" stroke-width="1" stroke-dasharray="1 6" stroke-dashoffset="-3"/>
<line x1="50.3" y1="115.7" x2="568.3" y2="207.7" stroke="#0000ff" stroke-width="1" stroke-dasharray="4 2"/>
<line x1="50.3" y1="115.7" x2="447.3" y2="186.2" stroke="#ff0000" stroke-width="1" stroke-dasharray="1 6" stroke-dashoffset="-3"/>
<line x1="24.0" y1="135.1" x2="81.5" y2="109.1" stroke="#008080" stroke-width="1" />
<line x1="24.0" y1="135.1" x2="81.5" y2="109.1" stroke="#808080" stroke-width="1" stroke-dasharray="3 2"/>
<line x1="37.8" y1="137.6" x2="95.2" y2="111.6" stroke="#008080" stroke-width="1" />
<line x1="37.8" y1="137.6" x2="95.2" y2="111.6" stroke="#808080" stroke-width="1" stroke-dasharray="3 2"/>
<line x1="51.5" y1="140.0" x2="109.0" y2="114.0" stroke="#008080" stroke-width="1" />
<line x1="51.5" y1="140.0" x2="109.0" y2="114.0" stroke="#808080" stroke-width="1" stroke-dasharray="3 2"/>
<line x1="65.2" y1="142.5" x2="122.8" y2="116.5" stroke="#008080" stroke-width="1" />
<line x1="65.2" y1="142.5" x2="122.8" y2="116.5" stroke="#808080" stroke-width="1" stroke-dasharray="3 2"/>
<line x1="79.0" y1="144.9" x2="136.5" y2="118.9" stroke="#008080" stroke-width="1" />
<line x1="79.0" y1="144.9" x2="136.5" y2="118.9" stroke="#808080" stroke-width="1" stroke-dasharray="3 2"/>
<line x1="92.8" y1="147.3" x2="150.2" y2="121.3" stroke="#008080" stroke-width="1" />
<line x1="92.8" y1="147.3" x2="150.2" y2="121.3" stroke="#808080" stroke-width="1" stroke-dasharray="3 2"/>
<line x1="106.5" y1="149.8" x2="164.0" y2="123.8" stroke="#008080" stroke-width="1" />
<line x1="106.5" y1="149.8" x2="164.0" y2="123.8" stroke="#808080" stroke-width="1" stroke-dasharray="3 2"/>
<line x1="120.2" y1="152.2" x2="177.8" y2="126.2" stroke="#008080" stroke-width="1" />
<line x1="120.2" y1="152.2" x2="177.8" y2="126.2" stroke="#808080" stroke-width="1" stroke-dasharray="3 2"/>
<line x1="134.0" y1="154.7" x2="191.5" y2="128.7" stroke="#008080" stroke-width="1" />
<line x1="134.0" y1="154.7" x2="191.5" y2="128.7" stroke="#808080" stroke-width="1" stroke-dasharray="3 2"/>
<line x1="147.8" y1="157.1" x2="205.2" y2="131.1" stroke="#008080" stroke-width="1" />
<line x1="147.8" y1="157.1" x2="205.2" y2="131.1" stroke="#808080" stroke-width="1" stroke-dasharray="3 2"/>
<line x1="161.5" y1="159.6" x2="219.0" y2="133.6" stroke="#008080" stroke-width="1" />
<line x1="161.5" y1="159.6" x2="219.0" y2="133.6" stroke="#808080" stroke-width="1" stroke-dasharray="3 2"/>
<line x1="175.2" y1="162.0" x2="232.8" y2="136.0" stroke="#008080" stroke-width="1" />
<line x1="175.2" y1="162.0" x2="232.8" y2="136.0" stroke="#808080" stroke-width="1" stroke-dasharray="3 2"/>
<line x1="189.0" y1="164.4" x2="246.5" y2="138.4" stroke="#008080" stroke-width="1" />
<line x1="189.0" y1="164.4" x2="246.5" y2="138.4" stroke="#808080" stroke-width="1" stroke-dasharray="3 2"/>
<line x1="202.8" y1="166.9" x2="260.2" y2="140.9" stroke="#008080" stroke-width="1" />
<line x1="202.8" y1="166.9" x2="260.2" y2="140.9" stroke="#808080" stroke-width="1" stroke-dasharray="3 2"/>
<line x1="216.5" y1="169.3" x2="274.0" y2="143.3" stroke="#008080" stroke-width="1" />
<line x1="216.5" y1="169.3" x2="274.0" y2="143.3" stroke="#808080" stroke-width="1" stroke-dasharray="3 2"/>
<line x1="230.2" y1="171.8" x2="287.8" y2="145.8" stroke="#008080" stroke-width="1" />
<line x1="230.2" y1="171.8" x2="287.8" y2="145.8" stroke="#808080" stroke-width="1" stroke-dasharray="3 2"/>
<line x1="244.0" y1="174.2" x2="301.5" y2="148.2" stroke="#008080" stroke-width="1" />
<line x1="244.0" y1="174.2" x2="301.5" y2="148.2" stroke="#808080" stroke-width="1" stroke-dasharray="3 2"/>
<line x1="257.8" y1="176.6" x2="315.2" y2="150.6" stroke="#008080" stroke-width="1" />
<line x1="257.8" y1="176.6" x2="315.2" y2="150.6" stroke="#808080" stroke-width="1" stroke-dasharray="3 2"/>
<line x1="271.5" y1="179.1" x2="329.0" y2="153.1" stroke="#008080" stroke-width="1" />
<line x1="271.5" y1="179.1" x2="329.0" y2="153.1" stroke="#808080" stroke-width="1" stroke-dasharray="3 2"/>
<line x1="285.2" y1="181.5" x2="342.8" y2="155.5" stroke="#008080" stroke-width="1" />
<line x1="285.2" y1="181.5" x2="342.8" y2="155.5" stroke="#808080" stroke-width="1" stroke-dasharray="3 2"/>
<line x1="299.0" y1="184.0" x2="356.5" y2="158.0" stroke="#008080" stroke-width="1" />
<line x1="299.0" y1="184.0" x2="356.5" y2="158.0" stroke="#808080" stroke-width="1" stroke-dasharray="3 2"/>
<line x1="312.8" y1="186.4" x2="370.2" y2="160.4" stroke="#008080" stroke-width="1" />
<line x1="312.8" y1="186.4" x2="370.2" y2="160.4" stroke="#808080" stroke-width="1" stroke-dasharray="3 2"/>
<line x1="326.5" y1="188.9" x2="384.0" y2="162.9" stroke="#008080" stroke-width="1" />
<line x1="326.5" y1="188.9" x2="384.0" y2="162.9" stroke="#808080" stroke-width="1" stroke-dasharray="3 2"/>
<line x1="340.2" y1="191.3" x2="397.8" y2="165.3" stroke="#008080" stroke-width="1" />
<line x1="340.2" y1="191.3" x2="397.8" y2="165.3" stroke="#808080" stroke-width="1" stroke-dasharray="3 2"/>
<line x1="354.0" y1="193.7" x2="411.5" y2="167.7" stroke="#008080" stroke-width="1" />
<line x1="354.0" y1="193.7" x2="411.5" y2="167.7" stroke="#808080" stroke-width="1" stroke-dasharray="3 2"/>
<line x1="367.8" y1="196.2" x2="425.2" y2="170.2" stroke="#008080" stroke-width="1" />
<line x1="367.8" y1="196.2" x2="425.2" y2="170.2" stroke="#808080" stroke-width="1" stroke-dasharray="3 2"/>
<line x1="381.5" y1="198.6" x2="439.0" y2="172.6" stroke="#008080" stroke-width="1" />
<line x1="381.5" y1="198.6" x2="439.0" y2="172.6" stroke="#808080" stroke-width="1" stroke-dasharray="3 2"/>
<line x1="395.2" y1="201.1" x2="452.8" y2="175.1" stroke="#008080" stroke-width="1" />
<line x1="395.2" y1="201.1" x2="452.8" y2="175.1" stroke="#808080" stroke-width="1" stroke-dasharray="3 2"/>
<line x1="409.0" y1="203.5" x2="466.5" y2="177.5" stroke="#008080" stroke-width="1" />
<line x1="409.0" y1="203.5" x2="466.5" y2="177.5" stroke="#808080" stroke-width="1" stroke-dasharray="3 2"/>
<line x1="422.8" y1="206.0" x2="480.2" y2="180.0" stroke="#008080" stroke-width="1" />
<line x1="422.8" y1="206.0" x2="480.2" y2="180.0" stroke="#808080" stroke-width="1" stroke-dasharray="3 2"/>
<line x1="436.5" y1="208.4" x2="494.0" y2="182.4" stroke="#008080" stroke-width="1" />
<line x1="436.5" y1="208.4" x2="494.0" y2="182.4" stroke="#808080" stroke-width="1" stroke-dasharray="3 2"/>
<line x1="450.2" y1="210.8" x2="507.8" y2="184.8" stroke="#008080" stroke-width="1" />
<line x1="450.2" y1="210.8" x2="507.8" y2="184.8" stroke="#808080" stroke-width="1" stroke-dasharray="3 2"/>
<line x1="464.0" y1="213.3" x2="521.5" y2="187.3" stroke="#008080" stroke-width="1" />
<line x1="464.0" y1="213.3" x2="521.5" y2="187.3" stroke="#808080" stroke-width="1" stroke-dasharray="3 2"/>
<line x1="477.8" y1="215.7" x2="535.2" y2="189.7" stroke="#008080" stroke-width="1" />
<line x1="477.8" y1="215.7" x2="535.2" y2="189.7" stroke="#808080" stroke-width="1" stroke-dasharray="3 2"/>
<line x1="491.5" y1="218.2" x2="549.0" y2="192.2" stroke="#008080" stroke-width="1" />
<line x1="491.5" y1="218.2" x2="549.0" y2="192.2" stroke="#808080" stroke-width="1" stroke-dasharray="3 2"/>
<line x1="505.2" y1="220.6" x2="562.8" y2="194.6" stroke="#008080" stroke-width="1" />
<line x1="505.2" y1="220.6" x2="562.8" y2="194.6" stroke="#808080" stroke-width="1" stroke-dasharray="3 2"/>
<line x1="519.0" y1="223.0" x2="576.5" y2="197.0" stroke="#008080" stroke-width="1" />
<line x1="519.0" y1="223.0" x2="576.5" y2="197.0" stroke="#808080" stroke-width="1" stroke-dasharray="3 2"/>
<line x1="12.0" y1="133.0" x2="69.5" y2="107.0" stroke="#800080" stroke-width="1" />
<line x1="530.0" y1="225.0" x2="587.5" y2="199.0" stroke="#800080" stroke-width="1" />
<line x1="12.0" y1="133.0" x2="190.0" y2="164.6" stroke="#000000" stroke-width="1" />
<line x1="190.0" y1="164.6" x2="409.0" y2="203.5" stroke="#000080" stroke-width="1" />
<line x1="409.0" y1="203.5" x2="530.0" y2="225.0" stroke="#000000" stroke-width="1" />
<line x1="70.0" y1="107.0" x2="218.0" y2="133.3" stroke="#000000" stroke-width="1" />
<line x1="218.0" y1="133.3" x2="425.0" y2="170.1" stroke="#000080" stroke-width="1" />
<line x1="425.0" y1="170.1" x2="588.0" y2="199.0" stroke="#000000" stroke-width="1" />
<line x1="88.6" y1="140.6" x2="88.6" y2="139.4" stroke="#ff0000" stroke-width="1" />
<line x1="102.3" y1="143.0" x2="102.3" y2="141.3" stroke="#ff0000" stroke-width="1" />
<line x1="116.1" y1="145.5" x2="116.1" y2="143.1" stroke="#ff0000" stroke-width="1" />
<line x1="129.8" y1="147.9" x2="129.8" y2="144.6" stroke="#ff0000" stroke-width="1" />
<line x1="143.6" y1="150.3" x2="143.6" y2="145.0" stroke="#ff0000" stroke-width="1" />
<line x1="157.3" y1="152.8" x2="157.3" y2="149.1" stroke="#ff0000" stroke-width="1" />
<line x1="171.1" y1="155.2" x2="171.1" y2="153.0" stroke="#ff0000" stroke-width="1" />
<line x1="212.3" y1="162.5" x2="212.3" y2="164.1" stroke="#ff0000" stroke-width="1" />
<line x1="226.1" y1="165.0" x2="226.1" y2="167.5" stroke="#ff0000" stroke-width="1" />
<line x1="239.8" y1="167.4" x2="239.8" y2="170.7" stroke="#ff0000" stroke-width="1" />
<line x1="253.6" y1="169.9" x2="253.6" y2="173.5" stroke="#ff0000" stroke-width="1" />
<line x1="267.3" y1="172.3" x2="267.3" y2="175.9" stroke="#ff0000" stroke-width="1" />
<line x1="281.1" y1="174.8" x2="281.1" y2="178.2" stroke="#ff0000" stroke-width="1" />
<line x1="294.8" y1="177.2" x2="294.8" y2="180.3" stroke="#ff0000" stroke-width="1" />
<line x1="308.6" y1="179.6" x2="308.6" y2="182.5" stroke="#ff0000" stroke-width="1" />
<line x1="322.3" y1="182.1" x2="322.3" y2="184.5" stroke="#ff0000" stroke-width="1" />
<line x1="336.1" y1="184.5" x2="336.1" y2="186.3" stroke="#ff0000" stroke-width="1" />
<line x1="349.8" y1="187.0" x2="349.8" y2="188.0" stroke="#ff0000" stroke-width="1" />
<line x1="391.1" y1="194.3" x2="391.1" y2="192.4" stroke="#ff0000" stroke-width="1" />
<line x1="404.8" y1="196.7" x2="404.8" y2="193.5" stroke="#ff0000" stroke-width="1" />
<line x1="418.6" y1="199.2" x2="418.6" y2="194.7" stroke="#ff0000" stroke-width="1" />
<line x1="98.2" y1="136.2" x2="98.2" y2="135.2" stroke="#ff0000" stroke-width="1" />
<line x1="111.9" y1="138.7" x2="111.9" y2="137.1" stroke="#ff0000" stroke-width="1" />
<line x1="125.7" y1="141.1" x2="125.7" y2="138.9" stroke="#ff0000" stroke-width="1" />
<line x1="139.4" y1="143.6" x2="139.4" y2="140.4" stroke="#ff0000" stroke-width="1" />
<line x1="153.2" y1="146.0" x2="153.2" y2="141.0" stroke="#ff0000" stroke-width="1" />
<line x1="166.9" y1="148.4" x2="166.9" y2="145.0" stroke="#ff0000" stroke-width="1" />
<line x1="180.7" y1="150.9" x2="180.7" y2="148.8" stroke="#ff0000" stroke-width="1" />
<line x1="221.9" y1="158.2" x2="221.9" y2="159.7" stroke="#ff0000" stroke-width="1" />
<line x1="235.7" y1="160.7" x2="235.7" y2="163.1" stroke="#ff0000" stroke-width="1" />
<line x1="249.4" y1="163.1" x2="249.4" y2="166.1" stroke="#ff0000" stroke-width="1" />
<line x1="263.2" y1="165.5" x2="263.2" y2="168.9" stroke="#ff0000" stroke-width="1" />
<line x1="276.9" y1="168.0" x2="276.9" y2="171.4" stroke="#ff0000" stroke-width="1" />
<line x1="290.7" y1="170.4" x2="290.7" y2="173.7" stroke="#ff0000" stroke-width="1" />
<line x1="304.4" y1="172.9" x2="304.4" y2="175.8" stroke="#ff0000" stroke-width="1" />
<line x1="318.2" y1="175.3" x2="318.2" y2="178.0" stroke="#ff0000" stroke-width="1" />
<line x1="331.9" y1="177.7" x2="331.9" y2="180.0" stroke="#ff0000" stroke-width="1" />
<line x1="345.7" y1="180.2" x2="345.7" y2="181.8" stroke="#ff0000" stroke-width="1" />
<line x1="400.7" y1="190.0" x2="400.7" y2="188.2" stroke="#ff0000" stroke-width="1" />
<line x1="414.4" y1="192.4" x2="414.4" y2="189.4" stroke="#ff0000" stroke-width="1" />
<line x1="428.2" y1="194.8" x2="428.2" y2="190.8" stroke="#ff0000" stroke-width="1" />
<line x1="121.5" y1="134.3" x2="121.5" y2="132.9" stroke="#ff0000" stroke-width="1" />
<line x1="135.2" y1="136.8" x2="135.2" y2="134.7" stroke="#ff0000" stroke-width="1" />
<line x1="149.0" y1="139.2" x2="149.0" y2="136.3" stroke="#ff0000" stroke-width="1" />
<line x1="162.8" y1="141.7" x2="162.8" y2="137.0" stroke="#ff0000" stroke-width="1" />
<line x1="176.5" y1="144.1" x2="176.5" y2="140.9" stroke="#ff0000" stroke-width="1" />
<line x1="190.2" y1="146.6" x2="190.2" y2="144.7" stroke="#ff0000" stroke-width="1" />
<line x1="231.5" y1="153.9" x2="231.5" y2="155.3" stroke="#ff0000" stroke-width="1" />
<line x1="245.2" y1="156.3" x2="245.2" y2="158.6" stroke="#ff0000" stroke-width="1" />
<line x1="259.0" y1="158.8" x2="259.0" y2="161.6" stroke="#ff0000" stroke-width="1" />
<line x1="272.8" y1="161.2" x2="272.8" y2="164.4" stroke="#ff0000" stroke-width="1" />
<line x1="286.5" y1="163.6" x2="286.5" y2="166.8" stroke="#ff0000" stroke-width="1" />
<line x1="300.2" y1="166.1" x2="300.2" y2="169.1" stroke="#ff0000" stroke-width="1" />
<line x1="314.0" y1="168.5" x2="314.0" y2="171.3" stroke="#ff0000" stroke-width="1" />
<line x1="327.8" y1="171.0" x2="327.8" y2="173.5" stroke="#ff0000" stroke-width="1" />
<line x1="341.5" y1="173.4" x2="341.5" y2="175.4" stroke="#ff0000" stroke-width="1" />
<line x1="355.2" y1="175.9" x2="355.2" y2="177.3" stroke="#ff0000" stroke-width="1" />
<line x1="410.2" y1="185.6" x2="410.2" y2="183.9" stroke="#ff0000" stroke-width="1" />
<line x1="424.0" y1="188.1" x2="424.0" y2="185.2" stroke="#ff0000" stroke-width="1" />
<line x1="437.8" y1="190.5" x2="437.8" y2="186.9" stroke="#ff0000" stroke-width="1" />
<line x1="131.1" y1="130.0" x2="131.1" y2="128.7" stroke="#ff0000" stroke-width="1" />
<line x1="144.8" y1="132.5" x2="144.8" y2="130.6" stroke="#ff0000" stroke-width="1" />
<line x1="158.6" y1="134.9" x2="158.6" y2="132.1" stroke="#ff0000" stroke-width="1" />
<line x1="172.3" y1="137.3" x2="172.3" y2="133.0" stroke="#ff0000" stroke-width="1" />
<line x1="186.1" y1="139.8" x2="186.1" y2="136.8" stroke="#ff0000" stroke-width="1" />
<line x1="199.8" y1="142.2" x2="199.8" y2="140.5" stroke="#ff0000" stroke-width="1" />
<line x1="241.1" y1="149.5" x2="241.1" y2="150.9" stroke="#ff0000" stroke-width="1" />
<line x1="254.8" y1="152.0" x2="254.8" y2="154.2" stroke="#ff0000" stroke-width="1" />
<line x1="268.6" y1="154.4" x2="268.6" y2="157.1" stroke="#ff0000" stroke-width="1" />
<line x1="282.3" y1="156.9" x2="282.3" y2="159.9" stroke="#ff0000" stroke-width="1" />
<line x1="296.1" y1="159.3" x2="296.1" y2="162.3" stroke="#ff0000" stroke-width="1" />
<line x1="309.8" y1="161.8" x2="309.8" y2="164.6" stroke="#ff0000" stroke-width="1" />
<line x1="323.6" y1="164.2" x2="323.6" y2="166.8" stroke="#ff0000" stroke-width="1" />
<line x1="337.3" y1="166.6" x2="337.3" y2="169.0" stroke="#ff0000" stroke-width="1" />
<line x1="351.1" y1="169.1" x2="351.1" y2="170.9" stroke="#ff0000" stroke-width="1" />
<line x1="364.8" y1="171.5" x2="364.8" y2="172.8" stroke="#ff0000" stroke-width="1" />
<line x1="419.8" y1="181.3" x2="419.8" y2="179.7" stroke="#ff0000" stroke-width="1" />
<line x1="433.6" y1="183.7" x2="433.6" y2="181.1" stroke="#ff0000" stroke-width="1" />
<line x1="447.3" y1="186.2" x2="447.3" y2="182.9" stroke="#ff0000" stroke-width="1" />
<rect x="11" y="132" width="2" height="2" fill="#808080"/>
<rect x="16" y="130" width="2" height="2" fill="#808080"/>
<rect x="21" y="128" width="2" height="2" fill="#808080"/>
<rect x="25" y="126" width="2" height="2" fill="#808080"/>
<rect x="30" y="123" width="2" height="2" fill="#808080"/>
<rect x="35" y="121" width="2" height="2" fill="#808080"/>
<rect x="40" y="119" width="2" height="2" fill="#808080"/>
<rect x="45" y="117" width="2" height="2" fill="#808080"/>
<rect x="49" y="115" width="2" height="2" fill="#808080"/>
<rect x="54" y="112" width="2" height="2" fill="#808080"/>
<rect x="59" y="110" width="2" height="2" fill="#808080"/>
<rect x="64" y="108" width="2" height="2" fill="#808080"/>
<rect x="68" y="106" width="2" height="2" fill="#808080"/>
<rect x="529" y="224" width="2" height="2" fill="#808080"/>
<rect x="534" y="222" width="2" height="2" fill="#808080"/>
<rect x="539" y="220" width="2" height="2" fill="#808080"/>
<rect x="543" y="218" width="2" height="2" fill="#808080"/>
<rect x="548" y="215" width="2" height="2" fill="#808080"/>
<rect x="553" y="213" width="2" height="2" fill="#808080"/>
<rect x="558" y="211" width="2" height="2" fill="#808080"/>
<rect x="563" y="209" width="2" height="2" fill="#808080"/>
<rect x="567" y="207" width="2" height="2" fill="#808080"/>
<rect x="572" y="204" width="2" height="2" fill="#808080"/>
<rect x="577" y="202" width="2" height="2" fill="#808080"/>
<rect x="582" y="200" width="2" height="2" fill="#808080"/>
<rect x="586" y="198" width="2" height="2" fill="#808080"/>
<rect x="23" y="134" width="2" height="2" fill="#808080"/>
<rect x="33" y="130" width="2" height="2" fill="#808080"/>
<rect x="42" y="125" width="2" height="2" fill="#808080"/>
<rect x="52" y="121" width="2" height="2" fill="#808080"/>
<rect x="61" y="117" width="2" height="2" fill="#808080"/>
<rect x="71" y="112" width="2" height="2" fill="#808080"/>
<rect x="80" y="108" width="2" height="2" fill="#808080"/>
<rect x="37" y="137" width="2" height="2" fill="#808080"/>
<rect x="46" y="132" width="2" height="2" fill="#808080"/>
<rect x="56" y="128" width="2" height="2" fill="#808080"/>
<rect x="66" y="124" width="2" height="2" fill="#808080"/>
<rect x="75" y="119" width="2" height="2" fill="#808080"/>
<rect x="85" y="115" width="2" height="2" fill="#808080"/>
<rect x="94" y="111" width="2" height="2" fill="#808080"/>
<rect x="50" y="139" width="2" height="2" fill="#808080"/>
<rect x="60" y="135" width="2" height="2" fill="#808080"/>
<rect x="70" y="130" width="2" height="2" fill="#808080"/>
<rect x="79" y="126" width="2" height="2" fill="#808080"/>
<rect x="89" y="122" width="2" height="2" fill="#808080"/>
<rect x="98" y="117" width="2" height="2" fill="#808080"/>
<rect x="108" y="113" width="2" height="2" fill="#808080"/>
<rect x="64" y="141" width="2" height="2" fill="#808080"/>
<rect x="74" y="137" width="2" height="2" fill="#808080"/>
<rect x="83" y="133" width="2" height="2" fill="#808080"/>
<rect x="93" y="128" width="2" height="2" fill="#808080"/>
<rect x="103" y="124" width="2" height="2" fill="#808080"/>
<rect x="112" y="120" width="2" height="2" fill="#808080"/>
<rect x="122" y="115" width="2" height="2" fill="#808080"/>
<rect x="78" y="144" width="2" height="2" fill="#808080"/>
<rect x="88" y="140" width="2" height="2" fill="#808080"/>
<rect x="97" y="135" width="2" height="2" fill="#808080"/>
<rect x="107" y="131" width="2" height="2" fill="#808080"/>
<rect x="116" y="127" width="2" height="2" fill="#808080"/>
<rect x="126" y="122" width="2" height="2" fill="#808080"/>
<rect x="136" y="118" width="2" height="2" fill="#808080"/>
<rect x="92" y="146" width="2" height="2" fill="#808080"/>
<rect x="101" y="142" width="2" height="2" fill="#808080"/>
<rect x="111" y="138" width="2" height="2" fill="#808080"/>
<rect x="120" y="133" width="2" height="2" fill="#808080"/>
<rect x="130" y="129" width="2" height="2" fill="#808080"/>
<rect x="140" y="125" width="2" height="2" fill="#808080"/>
<rect x="149" y="120" width="2" height="2" fill="#808080"/>
<rect x="106" y="149" width="2" height="2" fill="#808080"/>
<rect x="115" y="144" width="2" height="2" fill="#808080"/>
<rect x="125" y="140" width="2" height="2" fill="#808080"/>
<rect x="134" y="136" width="2" height="2" fill="#808080"/>
<rect x="144" y="131" width="2" height="2" fill="#808080"/>
<rect x="153" y="127" width="2" height="2" fill="#808080"/>
<rect x="163" y="123" width="2" height="2" fill="#808080"/>
<rect x="119" y="151" width="2" height="2" fill="#808080"/>
<rect x="129" y="147" width="2" height="2" fill="#808080"/>
<rect x="138" y="143" width="2" height="2" fill="#808080"/>
<rect x="148" y="138" width="2" height="2" fill="#808080"/>
<rect x="158" y="134" width="2" height="2" fill="#808080"/>
<rect x="167" y="130" width="2" height="2" fill="#808080"/>
<rect x="177" y="125" width="2" height="2" fill="#808080"/>
<rect x="133" y="154" width="2" height="2" fill="#808080"/>
<rect x="143" y="149" width="2" height="2" fill="#808080"/>
<rect x="152" y="145" width="2" height="2" fill="#808080"/>
<rect x="162" y="141" width="2" height="2" fill="#808080"/>
<rect x="171" y="136" width="2" height="2" fill="#808080"/>
<rect x="181" y="132" width="2" height="2" fill="#808080"/>
<rect x="190" y="128" width="2" height="2" fill="#808080"/>
<rect x="147" y="156" width="2" height="2" fill="#808080"/>
<rect x="156" y="152" width="2" height="2" fill="#808080"/>
<rect x="166" y="147" width="2" height="2" fill="#808080"/>
<rect x="176" y="143" width="2" height="2" fill="#808080"/>
<rect x="185" y="139" width="2" height="2" fill="#808080"/>
<rect x="195" y="134" width="2" height="2" fill="#808080"/>
<rect x="204" y="130" width="2" height="2" fill="#808080"/>
<rect x="160" y="159" width="2" height="2" fill="#808080"/>
<rect x="170" y="154" width="2" height="2" fill="#808080"/>
<rect x="180" y="150" width="2" height="2" fill="#808080"/>
<rect x="189" y="146" width="2" height="2" fill="#808080"/>
<rect x="199" y="141" width="2" height="2" fill="#808080"/>
<rect x="208" y="137" width="2" height="2" fill="#808080"/>
<rect x="218" y="133" width="2" height="2" fill="#808080"/>
<rect x="174" y="161" width="2" height="2" fill="#808080"/>
<rect x="184" y="157" width="2" height="2" fill="#808080"/>
<rect x="193" y="152" width="2" height="2" fill="#808080"/>
<rect x="203" y="148" width="2" height="2" fill="#808080"/>
<rect x="213" y="144" width="2" height="2" fill="#808080"/>
<rect x="222" y="139" width="2" height="2" fill="#808080"/>
<rect x="232" y="135" width="2" height="2" fill="#808080"/>
<rect x="188" y="163" width="2" height="2" fill="#808080"/>
<rect x="198" y="159" width="2" height="2" fill="#808080"/>
<rect x="207" y="155" width="2" height="2" fill="#808080"/>
<rect x="217" y="150" width="2" height="2" fill="#808080"/>
<rect x="226" y="146" width="2" height="2" fill="#808080"/>
<rect x="236" y="142" width="2" height="2" fill="#808080"/>
<rect x="246" y="137" width="2" height="2" fill="#808080"/>
<rect x="202" y="166" width="2" height="2" fill="#808080"/>
<rect x="211" y="162" width="2" height="2" fill="#808080"/>
<rect x="221" y="157" width="2" height="2" fill="#808080"/>
<rect x="230" y="153" width="2" height="2" fill="#808080"/>
<rect x="240" y="149" width="2" height="2" fill="#808080"/>
<rect x="250" y="144" width="2" height="2" fill="#808080"/>
<rect x="259" y="140" width="2" height="2" fill="#808080"/>
<rect x="216" y="168" width="2" height="2" fill="#808080"/>
<rect x="225" y="164" width="2" height="2" fill="#808080"/>
<rect x="235" y="160" width="2" height="2" fill="#808080"/>
<rect x="244" y="155" width="2" height="2" fill="#808080"/>
<rect x="254" y="151" width="2" height="2" fill="#808080"/>
<rect x="263" y="147" width="2" height="2" fill="#808080"/>
<rect x="273" y="142" width="2" height="2" fill="#808080"/>
<rect x="229" y="171" width="2" height="2" fill="#808080"/>
<rect x="239" y="166" width="2" height="2" fill="#808080"/>
<rect x="248" y="162" width="2" height="2" fill="#808080"/>
<rect x="258" y="158" width="2" height="2" fill="#808080"/>
<rect x="268" y="153" width="2" height="2" fill="#808080"/>
<rect x="277" y="149" width="2" height="2" fill="#808080"/>
<rect x="287" y="145" width="2" height="2" fill="#808080"/>
<rect x="243" y="173" width="2" height="2" fill="#808080"/>
<rect x="253" y="169" width="2" height="2" fill="#808080"/>
<rect x="262" y="165" width="2" height="2" fill="#808080"/>
<rect x="272" y="160" width="2" height="2" fill="#808080"/>
<rect x="281" y="156" width="2" height="2" fill="#808080"/>
<rect x="291" y="152" width="2" height="2" fill="#808080"/>
<rect x="300" y="147" width="2" height="2" fill="#808080"/>
<rect x="257" y="176" width="2" height="2" fill="#808080"/>
<rect x="266" y="171" width="2" height="2" fill="#808080"/>
<rect x="276" y="167" width="2" height="2" fill="#808080"/>
<rect x="286" y="163" width="2" height="2" fill="#808080"/>
<rect x="295" y="158" width="2" height="2" fill="#808080"/>
<rect x="305" y="154" width="2" height="2" fill="#808080"/>
<rect x="314" y="150" width="2" height="2" fill="#808080"/>
<rect x="270" y="178" width="2" height="2" fill="#808080"/>
<rect x="280" y="174" width="2" height="2" fill="#808080"/>
<rect x="290" y="169" width="2" height="2" fill="#808080"/>
<rect x="299" y="165" width="2" height="2" fill="#808080"/>
<rect x="309" y="161" width="2" height="2" fill="#808080"/>
<rect x="318" y="156" width="2" height="2" fill="#808080"/>
<rect x="328" y="152" width="2" height="2" fill="#808080"/>
<rect x="284" y="181" width="2" height="2" fill="#808080"/>
<rect x="294" y="176" width="2" height="2" fill="#808080"/>
<rect x="303" y="172" width="2" height="2" fill="#808080"/>
<rect x="313" y="168" width="2" height="2" fill="#808080"/>
<rect x="323" y="163" width="2" height="2" fill="#808080"/>
<rect x="332" y="159" width="2" height="2" fill="#808080"/>
<rect x="342" y="155" width="2" height="2" fill="#808080"/>
<rect x="298" y="183" width="2" height="2" fill="#808080"/>
<rect x="308" y="179" width="2" height="2" fill="#808080"/>
<rect x="317" y="174" width="2" height="2" fill="#808080"/>
<rect x="327" y="170" width="2" height="2" fill="#808080"/>
<rect x="336" y="166" width="2" height="2" fill="#808080"/>
<rect x="346" y="161" width="2" height="2" fill="#808080"/>
<rect x="356" y="157" width="2" height="2" fill="#808080"/>
<rect x="312" y="185" width="2" height="2" fill="#808080"/>
<rect x="321" y="181" width="2" height="2" fill="#808080"/>
<rect x="331" y="177" width="2" height="2" fill="#808080"/>
<rect x="340" y="172" width="2" height="2" fill="#808080"/>
<rect x="350" y="168" width="2" height="2" fill="#808080"/>
<rect x="360" y="164" width="2" height="2" fill="#808080"/>
<rect x="369" y="159" width="2" height="2" fill="#808080"/>
<rect x="326" y="188" width="2" height="2" fill="#808080"/>
<rect x="335" y="184" width="2" height="2" fill="#808080"/>
<rect x="345" y="179" width="2" height="2" fill="#808080"/>
<rect x="354" y="175" width="2" height="2" fill="#808080"/>
<rect x="364" y="171" width="2" height="2" fill="#808080"/>
<rect x="373" y="166" width="2" height="2" fill="#808080"/>
<rect x="383" y="162" width="2" height="2" fill="#808080"/>
<rect x="339" y="190" width="2" height="2" fill="#808080"/>
<rect x="349" y="186" width="2" height="2" fill="#808080"/>
<rect x="358" y="182" width="2" height="2" fill="#808080"/>
<rect x="368" y="177" width="2" height="2" fill="#808080"/>
<rect x="378" y="173" width="2" height="2" fill="#808080"/>
<rect x="387" y="169" width="2" height="2" fill="#808080"/>
<rect x="397" y="164" width="2" height="2" fill="#808080"/>
<rect x="353" y="193" width="2" height="2" fill="#808080"/>
<rect x="363" y="188" width="2" height="2" fill="#808080"/>
<rect x="372" y="184" width="2" height="2" fill="#808080"/>
<rect x="382" y="180" width="2" height="2" fill="#808080"/>
<rect x="391" y="175" width="2" height="2" fill="#808080"/>
<rect x="401" y="171" width="2" height="2" fill="#808080"/>
<rect x="410" y="167" width="2" height="2" fill="#808080"/>
<rect x="367" y="195" width="2" height="2" fill="#808080"/>
<rect x="376" y="191" width="2" height="2" fill="#808080"/>
<rect x="386" y="187" width="2" height="2" fill="#808080"/>
<rect x="396" y="182" width="2" height="2" fill="#808080"/>
<rect x="405" y="178" width="2" height="2" fill="#808080"/>
<rect x="415" y="174" width="2" height="2" fill="#808080"/>
<rect x="424" y="169" width="2" height="2" fill="#808080"/>
<rect x="380" y="198" width="2" height="2" fill="#808080"/>
<rect x="390" y="193" width="2" height="2" fill="#808080"/>
<rect x="400" y="189" width="2" height="2" fill="#808080"/>
<rect x="409" y="185" width="2" height="2" fill="#808080"/>
<rect x="419" y="180" width="2" height="2" fill="#808080"/>
<rect x="428" y="176" width="2" height="2" fill="#808080"/>
<rect x="438" y="172" width="2" height="2" fill="#808080"/>
<rect x="394" y="200" width="2" height="2" fill="#808080"/>
<rect x="404" y="196" width="2" height="2" fill="#808080"/>
<rect x="413" y="191" width="2" height="2" fill="#808080"/>
<rect x="423" y="187" width="2" height="2" fill="#808080"/>
<rect x="433" y="183" width="2" height="2" fill="#808080"/>
<rect x="442" y="178" width="2" height="2" fill="#808080"/>
<rect x="452" y="174" width="2" height="2" fill="#808080"/>
<rect x="408" y="203" width="2" height="2" fill="#808080"/>
<rect x="418" y="198" width="2" height="2" fill="#808080"/>
<rect x="427" y="194" width="2" height="2" fill="#808080"/>
<rect x="437" y="190" width="2" height="2" fill="#808080"/>
<rect x="446" y="185" width="2" height="2" fill="#808080"/>
<rect x="456" y="181" width="2" height="2" fill="#808080"/>
<rect x="466" y="177" width="2" height="2" fill="#808080"/>
<rect x="422" y="205" width="2" height="2" fill="#808080"/>
<rect x="431" y="201" width="2" height="2" fill="#808080"/>
<rect x="441" y="196" width="2" height="2" fill="#808080"/>
<rect x="450" y="192" width="2" height="2" fill="#808080"/>
<rect x="460" y="188" width="2" height="2" fill="#808080"/>
<rect x="470" y="183" width="2" height="2" fill="#808080"/>
<rect x="479" y="179" width="2" height="2" fill="#808080"/>
<rect x="436" y="207" width="2" height="2" fill="#808080"/>
<rect x="445" y="203" width="2" height="2" fill="#808080"/>
<rect x="455" y="199" width="2" height="2" fill="#808080"/>
<rect x="464" y="194" width="2" height="2" fill="#808080"/>
<rect x="474" y="190" width="2" height="2" fill="#808080"/>
<rect x="483" y="186" width="2" height="2" fill="#808080"/>
<rect x="493" y="181" width="2" height="2" fill="#808080"/>
<rect x="449" y="210" width="2" height="2" fill="#808080"/>
<rect x="459" y="206" width="2" height="2" fill="#808080"/>
<rect x="468" y="201" width="2" height="2" fill="#808080"/>
<rect x="478" y="197" width="2" height="2" fill="#808080"/>
<rect x="488" y="193" width="2" height="2" fill="#808080"/>
<rect x="497" y="188" width="2" height="2" fill="#808080"/>
<rect x="507" y="184" width="2" height="2" fill="#808080"/>
<rect x="463" y="212" width="2" height="2" fill="#808080"/>
<rect x="473" y="208" width="2" height="2" fill="#808080"/>
<rect x="482" y="204" width="2" height="2" fill="#808080"/>
<rect x="492" y="199" width="2" height="2" fill="#808080"/>
<rect x="501" y="195" width="2" height="2" fill="#808080"/>
<rect x="511" y="191" width="2" height="2" fill="#808080"/>
<rect x="520" y="186" width="2" height="2" fill="#808080"/>
<rect x="477" y="215" width="2" height="2" fill="#808080"/>
<rect x="486" y="210" width="2" height="2" fill="#808080"/>
<rect x="496" y="206" width="2" height="2" fill="#808080"/>
<rect x="506" y="202" width="2" height="2" fill="#808080"/>
<rect x="515" y="197" width="2" height="2" fill="#808080"/>
<rect x="525" y="193" width="2" height="2" fill="#808080"/>
<rect x="534" y="189" width="2" height="2" fill="#808080"/>
<rect x="490" y="217" width="2" height="2" fill="#808080"/>
<rect x="500" y="213" width="2" height="2" fill="#808080"/>
<rect x="510" y="208" width="2" height="2" fill="#808080"/>
<rect x="519" y="204" width="2" height="2" fill="#808080"/>
<rect x="529" y="200" width="2" height="2" fill="#808080"/>
<rect x="538" y="195" width="2" height="2" fill="#808080"/>
<rect x="548" y="191" width="2" height="2" fill="#808080"/>
<rect x="504" y="220" width="2" height="2" fill="#808080"/>
<rect x="514" y="215" width="2" height="2" fill="#808080"/>
<rect x="523" y="211" width="2" height="2" fill="#808080"/>
<rect x="533" y="207" width="2" height="2" fill="#808080"/>
<rect x="543" y="202" width="2" height="2" fill="#808080"/>
<rect x="552" y="198" width="2" height="2" fill="#808080"/>
<rect x="562" y="194" width="2" height="2" fill="#808080"/>
<rect x="518" y="222" width="2" height="2" fill="#808080"/>
<rect x="528" y="218" width="2" height="2" fill="#808080"/>
<rect x="537" y="213" width="2" height="2" fill="#808080"/>
<rect x="547" y="209" width="2" height="2" fill="#808080"/>
<rect x="556" y="205" width="2" height="2" fill="#808080"/>
<rect x="566" y="200" width="2" height="2" fill="#808080"/>
<rect x="576" y="196" width="2" height="2" fill="#808080"/>
<line x1="106.2" y1="149.7" x2="106.2" y2="100.0" stroke="#ff0000" stroke-width="1" />
<line x1="120.0" y1="152.2" x2="120.0" y2="82.0" stroke="#ff0000" stroke-width="1" />
<line x1="128.5" y1="153.7" x2="128.5" y2="69.8" stroke="#ff0000" stroke-width="1" />
<line x1="133.5" y1="154.6" x2="133.5" y2="51.9" stroke="#ff0000" stroke-width="1" />
<line x1="139.0" y1="155.6" x2="139.0" y2="58.0" stroke="#ff0000" stroke-width="1" />
<line x1="147.5" y1="157.1" x2="147.5" y2="79.3" stroke="#ff0000" stroke-width="1" />
<line x1="161.2" y1="159.5" x2="161.2" y2="112.3" stroke="#ff0000" stroke-width="1" />
<line x1="175.0" y1="161.9" x2="175.0" y2="141.7" stroke="#ff0000" stroke-width="1" />
<line x1="188.8" y1="164.4" x2="188.8" y2="167.7" stroke="#ff0000" stroke-width="1" />
<line x1="202.5" y1="166.8" x2="202.5" y2="198.9" stroke="#ff0000" stroke-width="1" />
<line x1="216.2" y1="169.3" x2="216.2" y2="222.3" stroke="#ff0000" stroke-width="1" />
<line x1="230.0" y1="171.7" x2="230.0" y2="239.7" stroke="#ff0000" stroke-width="1" />
<line x1="243.8" y1="174.2" x2="243.8" y2="250.5" stroke="#ff0000" stroke-width="1" />
<line x1="257.5" y1="176.6" x2="257.5" y2="252.2" stroke="#ff0000" stroke-width="1" />
<line x1="271.2" y1="179.0" x2="271.2" y2="251.4" stroke="#ff0000" stroke-width="1" />
<line x1="285.0" y1="181.5" x2="285.0" y2="247.9" stroke="#ff0000" stroke-width="1" />
<line x1="298.8" y1="183.9" x2="298.8" y2="245.2" stroke="#ff0000" stroke-width="1" />
<line x1="312.5" y1="186.4" x2="312.5" y2="237.9" stroke="#ff0000" stroke-width="1" />
<line x1="326.2" y1="188.8" x2="326.2" y2="226.5" stroke="#ff0000" stroke-width="1" />
<line x1="340.0" y1="191.3" x2="340.0" y2="214.0" stroke="#ff0000" stroke-width="1" />
<line x1="353.8" y1="193.7" x2="353.8" y2="199.8" stroke="#ff0000" stroke-width="1" />
<line x1="367.5" y1="196.1" x2="367.5" y2="181.5" stroke="#ff0000" stroke-width="1" />
<line x1="381.2" y1="198.6" x2="381.2" y2="159.1" stroke="#ff0000" stroke-width="1" />
<line x1="395.0" y1="201.0" x2="395.0" y2="134.0" stroke="#ff0000" stroke-width="1" />
<line x1="404.0" y1="202.6" x2="404.0" y2="118.7" stroke="#ff0000" stroke-width="1" />
<line x1="409.3" y1="203.6" x2="409.3" y2="117.8" stroke="#ff0000" stroke-width="1" />
<line x1="414.5" y1="204.5" x2="414.5" y2="135.2" stroke="#ff0000" stroke-width="1" />
<line x1="423.8" y1="206.1" x2="423.8" y2="144.9" stroke="#ff0000" stroke-width="1" />
<line x1="437.5" y1="208.6" x2="437.5" y2="157.0" stroke="#ff0000" stroke-width="1" />
<line x1="451.2" y1="211.0" x2="451.2" y2="169.7" stroke="#ff0000" stroke-width="1" />
<line x1="465.0" y1="213.5" x2="465.0" y2="183.5" stroke="#ff0000" stroke-width="1" />
<line x1="478.8" y1="215.9" x2="478.8" y2="196.5" stroke="#ff0000" stroke-width="1" />
<line x1="492.5" y1="218.3" x2="492.5" y2="207.0" stroke="#ff0000" stroke-width="1" />
<polyline points="12.0,133.0 30.0,134.2 50.0,131.7 77.0,122.0 94.0,110.6 107.0,99.4 119.0,83.4 133.4,62.8 133.6,41.1 139.0,58.0 148.0,80.6 154.0,95.6 162.0,114.0 165.6,124.0 188.3,166.7 201.7,197.5 218.3,225.8 231.7,241.7 244.2,250.8 258.3,252.2 271.7,251.3 286.7,247.5 300.0,245.0 314.0,237.0 328.0,225.0 340.0,214.0 352.0,201.0 358.0,197.0 381.0,159.5 391.5,140.0 404.7,117.5 409.2,105.9 409.4,129.7 422.5,143.8 437.5,157.0 450.6,169.0 465.0,183.5 475.0,194.2 487.5,202.0 500.0,214.7 519.0,223.0" fill="none" stroke="#ff0000" stroke-width="1" />
<line x1="81.5" y1="109.0" x2="81.5" y2="111.0" stroke="#ff0000" stroke-width="1" />
<line x1="122.8" y1="116.4" x2="122.8" y2="110.3" stroke="#ff0000" stroke-width="1" />
<line x1="136.5" y1="118.8" x2="136.5" y2="105.6" stroke="#ff0000" stroke-width="1" />
<line x1="150.2" y1="121.3" x2="150.2" y2="98.6" stroke="#ff0000" stroke-width="1" />
<line x1="164.0" y1="123.7" x2="164.0" y2="91.7" stroke="#ff0000" stroke-width="1" />
<line x1="177.8" y1="126.1" x2="177.8" y2="79.0" stroke="#ff0000" stroke-width="1" />
<line x1="185.3" y1="127.5" x2="185.3" y2="73.1" stroke="#ff0000" stroke-width="1" />
<line x1="191.5" y1="128.6" x2="191.5" y2="55.6" stroke="#ff0000" stroke-width="1" />
<line x1="195.6" y1="129.3" x2="195.6" y2="64.5" stroke="#ff0000" stroke-width="1" />
<line x1="205.2" y1="131.0" x2="205.2" y2="81.7" stroke="#ff0000" stroke-width="1" />
<line x1="219.0" y1="133.5" x2="219.0" y2="104.6" stroke="#ff0000" stroke-width="1" />
<line x1="232.8" y1="135.9" x2="232.8" y2="124.8" stroke="#ff0000" stroke-width="1" />
<line x1="246.5" y1="138.3" x2="246.5" y2="145.9" stroke="#ff0000" stroke-width="1" />
<line x1="260.2" y1="140.8" x2="260.2" y2="164.5" stroke="#ff0000" stroke-width="1" />
<line x1="274.0" y1="143.2" x2="274.0" y2="181.8" stroke="#ff0000" stroke-width="1" />
<line x1="287.8" y1="145.7" x2="287.8" y2="192.1" stroke="#ff0000" stroke-width="1" />
<line x1="301.5" y1="148.1" x2="301.5" y2="199.4" stroke="#ff0000" stroke-width="1" />
<line x1="315.2" y1="150.6" x2="315.2" y2="202.1" stroke="#ff0000" stroke-width="1" />
<line x1="329.0" y1="153.0" x2="329.0" y2="202.6" stroke="#ff0000" stroke-width="1" />
<line x1="342.8" y1="155.4" x2="342.8" y2="200.8" stroke="#ff0000" stroke-width="1" />
<line x1="356.5" y1="157.9" x2="356.5" y2="196.8" stroke="#ff0000" stroke-width="1" />
<line x1="370.2" y1="160.3" x2="370.2" y2="190.2" stroke="#ff0000" stroke-width="1" />
<line x1="384.0" y1="162.8" x2="384.0" y2="183.0" stroke="#ff0000" stroke-width="1" />
<line x1="397.8" y1="165.2" x2="397.8" y2="176.2" stroke="#ff0000" stroke-width="1" />
<line x1="411.5" y1="167.7" x2="411.5" y2="169.7" stroke="#ff0000" stroke-width="1" />
<line x1="425.2" y1="170.1" x2="425.2" y2="158.8" stroke="#ff0000" stroke-width="1" />
<line x1="439.0" y1="172.5" x2="439.0" y2="144.9" stroke="#ff0000" stroke-width="1" />
<line x1="452.8" y1="175.0" x2="452.8" y2="129.3" stroke="#ff0000" stroke-width="1" />
<line x1="462.0" y1="176.6" x2="462.0" y2="116.8" stroke="#ff0000" stroke-width="1" />
<line x1="466.5" y1="177.4" x2="466.5" y2="128.4" stroke="#ff0000" stroke-width="1" />
<line x1="471.0" y1="178.2" x2="471.0" y2="131.5" stroke="#ff0000" stroke-width="1" />
<line x1="480.2" y1="179.9" x2="480.2" y2="137.8" stroke="#ff0000" stroke-width="1" />
<line x1="494.0" y1="182.3" x2="494.0" y2="145.6" stroke="#ff0000" stroke-width="1" />
<line x1="507.8" y1="184.7" x2="507.8" y2="156.2" stroke="#ff0000" stroke-width="1" />
<line x1="521.5" y1="187.2" x2="521.5" y2="165.2" stroke="#ff0000" stroke-width="1" />
<line x1="535.2" y1="189.6" x2="535.2" y2="175.6" stroke="#ff0000" stroke-width="1" />
<line x1="549.0" y1="192.1" x2="549.0" y2="184.0" stroke="#ff0000" stroke-width="1" />
<polyline points="70.0,107.0 82.0,111.1 100.0,113.5 118.8,111.6 133.8,107.0 148.8,99.4 163.8,92.0 176.9,79.7 185.6,72.8 190.0,66.6 190.2,52.6 195.0,63.4 204.4,80.3 218.4,103.8 232.5,124.4 239.7,136.6 271.7,180.0 286.0,191.1 300.0,199.0 314.0,202.0 329.0,202.6 342.0,201.0 354.0,198.0 370.0,190.3 390.0,179.8 416.9,167.2 437.5,146.6 452.5,129.6 465.3,112.3 465.5,127.7 480.6,138.0 494.2,145.7 507.8,156.2 521.0,164.8 535.5,175.8 549.0,184.0 561.8,192.9" fill="none" stroke="#ff0000" stroke-width="1" />
<line x1="24.0" y1="135.0" x2="24.1" y2="148.0" stroke="#00ff00" stroke-width="1" />
<line x1="24.1" y1="148.0" x2="24.7" y2="200.0" stroke="#808080" stroke-width="1" />
<line x1="24.7" y1="200.0" x2="26.8" y2="378.0" stroke="#0000ff" stroke-width="1" />
<polyline points="27.7,136.0 27.7,149.0 26.8,164.7 25.0,175.0 24.5,183.5" fill="none" stroke="#ff0000" stroke-width="1" />
<line x1="23.5" y1="135.0" x2="23.5" y2="143.0" stroke="#ff0000" stroke-width="1" />
<line x1="36.7" y1="137.0" x2="36.7" y2="142.5" stroke="#ff0000" stroke-width="1" />
<line x1="22.7" y1="200.0" x2="22.7" y2="250.0" stroke="#ff0000" stroke-width="1" />
<line x1="24.6" y1="271.0" x2="24.6" y2="291.0" stroke="#ff0000" stroke-width="1" />
<line x1="25.5" y1="310.0" x2="25.5" y2="325.0" stroke="#ff0000" stroke-width="1" />
<rect x="24" y="147" width="2" height="2" fill="#808080"/>
<rect x="24" y="173" width="2" height="2" fill="#808080"/>
<rect x="24" y="199" width="2" height="2" fill="#808080"/>
<line x1="23.5" y1="142.5" x2="42.0" y2="142.5" stroke="#ff0000" stroke-width="1" />
<rect x="17" y="207" width="2" height="2" fill="#808080"/>
<rect x="19" y="208" width="1" height="1" fill="#008080"/>
<rect x="20" y="208" width="1" height="1" fill="#ff00ff"/>
<rect x="21" y="208" width="1" height="1" fill="#008080"/>
<rect x="21" y="209" width="1" height="1" fill="#ff0000"/>
<rect x="22" y="209" width="1" height="1" fill="#ff00ff"/>
<rect x="23" y="209" width="1" height="1" fill="#008080"/>
<rect x="24" y="209" width="2" height="1" fill="#808080"/>
<rect x="24" y="208" width="1" height="1" fill="#808080"/>
<rect x="25" y="208" width="1" height="1" fill="#008080"/>
<rect x="26" y="209" width="1" height="1" fill="#ff0000"/>
<rect x="27" y="208" width="1" height="1" fill="#ff00ff"/>
<rect x="28" y="207" width="1" height="1" fill="#ff0000"/>
<rect x="29" y="206" width="2" height="2" fill="#808080"/>
<rect x="18" y="241" width="2" height="2" fill="#808080"/>
<rect x="20" y="242" width="1" height="1" fill="#008080"/>
<rect x="21" y="242" width="1" height="1" fill="#ff00ff"/>
<rect x="22" y="242" width="1" height="1" fill="#008080"/>
<rect x="22" y="243" width="1" height="1" fill="#ff0000"/>
<rect x="23" y="243" width="1" height="1" fill="#ff00ff"/>
<rect x="24" y="243" width="1" height="1" fill="#008080"/>
<rect x="25" y="243" width="2" height="1" fill="#808080"/>
<rect x="25" y="242" width="1" height="1" fill="#808080"/>
<rect x="26" y="242" width="1" height="1" fill="#008080"/>
<rect x="27" y="243" width="1" height="1" fill="#ff0000"/>
<rect x="28" y="242" width="1" height="1" fill="#ff00ff"/>
<rect x="29" y="241" width="1" height="1" fill="#ff0000"/>
<rect x="30" y="240" width="2" height="2" fill="#808080"/>
<rect x="18" y="275" width="2" height="2" fill="#808080"/>
<rect x="20" y="276" width="1" height="1" fill="#008080"/>
<rect x="21" y="276" width="1" height="1" fill="#ff00ff"/>
<rect x="22" y="276" width="1" height="1" fill="#008080"/>
<rect x="22" y="277" width="1" height="1" fill="#ff0000"/>
<rect x="23" y="277" width="1" height="1" fill="#ff00ff"/>
<rect x="24" y="277" width="1" height="1" fill="#008080"/>
<rect x="25" y="277" width="2" height="1" fill="#808080"/>
<rect x="25" y="276" width="1" height="1" fill="#808080"/>
<rect x="26" y="276" width="1" height="1" fill="#008080"/>
<rect x="27" y="277" width="1" height="1" fill="#ff0000"/>
<rect x="28" y="276" width="1" height="1" fill="#ff00ff"/>
<rect x="29" y="275" width="1" height="1" fill="#ff0000"/>
<rect x="30" y="274" width="2" height="2" fill="#808080"/>
<rect x="19" y="309" width="2" height="2" fill="#808080"/>
<rect x="21" y="310" width="1" height="1" fill="#008080"/>
<rect x="22" y="310" width="1" height="1" fill="#ff00ff"/>
<rect x="23" y="310" width="1" height="1" fill="#008080"/>
<rect x="23" y="311" width="1" height="1" fill="#ff0000"/>
<rect x="24" y="311" width="1" height="1" fill="#ff00ff"/>
<rect x="25" y="311" width="1" height="1" fill="#008080"/>
<rect x="26" y="311" width="2" height="1" fill="#808080"/>
<rect x="26" y="310" width="1" height="1" fill="#808080"/>
<rect x="27" y="310" width="1" height="1" fill="#008080"/>
<rect x="28" y="311" width="1" height="1" fill="#ff0000"/>
<rect x="29" y="310" width="1" height="1" fill="#ff00ff"/>
<rect x="30" y="309" width="1" height="1" fill="#ff0000"/>
<rect x="31" y="308" width="2" height="2" fill="#808080"/>
<rect x="19" y="343" width="2" height="2" fill="#808080"/>
<rect x="21" y="344" width="1" height="1" fill="#008080"/>
<rect x="22" y="344" width="1" height="1" fill="#ff00ff"/>
<rect x="23" y="344" width="1" height="1" fill="#008080"/>
<rect x="23" y="345" width="1" height="1" fill="#ff0000"/>
<rect x="24" y="345" width="1" height="1" fill="#ff00ff"/>
<rect x="25" y="345" width="1" height="1" fill="#008080"/>
<rect x="26" y="345" width="2" height="1" fill="#808080"/>
<rect x="26" y="344" width="1" height="1" fill="#808080"/>
<rect x="27" y="344" width="1" height="1" fill="#008080"/>
<rect x="28" y="345" width="1" height="1" fill="#ff0000"/>
<rect x="29" y="344" width="1" height="1" fill="#ff00ff"/>
<rect x="30" y="343" width="1" height="1" fill="#ff0000"/>
<rect x="31" y="342" width="2" height="2" fill="#808080"/>
<rect x="19" y="377" width="2" height="2" fill="#808080"/>
<rect x="21" y="378" width="1" height="1" fill="#008080"/>
<rect x="22" y="378" width="1" height="1" fill="#ff00ff"/>
<rect x="23" y="378" width="1" height="1" fill="#008080"/>
<rect x="23" y="379" width="1" height="1" fill="#ff0000"/>
<rect x="24" y="379" width="1" height="1" fill="#ff00ff"/>
<rect x="25" y="379" width="1" height="1" fill="#008080"/>
<rect x="26" y="379" width="2" height="1" fill="#808080"/>
<rect x="26" y="378" width="1" height="1" fill="#808080"/>
<rect x="27" y="378" width="1" height="1" fill="#008080"/>
<rect x="28" y="379" width="1" height="1" fill="#ff0000"/>
<rect x="29" y="378" width="1" height="1" fill="#ff00ff"/>
<rect x="30" y="377" width="1" height="1" fill="#ff0000"/>
<rect x="31" y="376" width="2" height="2" fill="#808080"/>
<line x1="81.5" y1="146.0" x2="81.9" y2="173.0" stroke="#808080" stroke-width="1" />
<line x1="81.9" y1="173.0" x2="84.3" y2="352.0" stroke="#0000ff" stroke-width="1" />
<polyline points="81.0,175.0 80.4,265.0 81.0,290.0" fill="none" stroke="#ff0000" stroke-width="1" />
<rect x="80" y="159" width="2" height="2" fill="#808080"/>
<rect x="80" y="172" width="2" height="2" fill="#808080"/>
<rect x="74" y="181" width="2" height="2" fill="#808080"/>
<rect x="76" y="182" width="1" height="1" fill="#008080"/>
<rect x="77" y="182" width="1" height="1" fill="#ff00ff"/>
<rect x="78" y="182" width="1" height="1" fill="#008080"/>
<rect x="78" y="183" width="1" height="1" fill="#ff0000"/>
<rect x="79" y="183" width="1" height="1" fill="#ff00ff"/>
<rect x="80" y="183" width="1" height="1" fill="#008080"/>
<rect x="81" y="183" width="2" height="1" fill="#808080"/>
<rect x="81" y="182" width="1" height="1" fill="#808080"/>
<rect x="82" y="182" width="1" height="1" fill="#008080"/>
<rect x="83" y="183" width="1" height="1" fill="#ff0000"/>
<rect x="84" y="182" width="1" height="1" fill="#ff00ff"/>
<rect x="85" y="181" width="1" height="1" fill="#ff0000"/>
<rect x="86" y="180" width="2" height="2" fill="#808080"/>
<rect x="75" y="216" width="2" height="2" fill="#808080"/>
<rect x="77" y="217" width="1" height="1" fill="#008080"/>
<rect x="78" y="217" width="1" height="1" fill="#ff00ff"/>
<rect x="79" y="217" width="1" height="1" fill="#008080"/>
<rect x="79" y="218" width="1" height="1" fill="#ff0000"/>
<rect x="80" y="218" width="1" height="1" fill="#ff00ff"/>
<rect x="81" y="218" width="1" height="1" fill="#008080"/>
<rect x="82" y="218" width="2" height="1" fill="#808080"/>
<rect x="82" y="217" width="1" height="1" fill="#808080"/>
<rect x="83" y="217" width="1" height="1" fill="#008080"/>
<rect x="84" y="218" width="1" height="1" fill="#ff0000"/>
<rect x="85" y="217" width="1" height="1" fill="#ff00ff"/>
<rect x="86" y="216" width="1" height="1" fill="#ff0000"/>
<rect x="87" y="215" width="2" height="2" fill="#808080"/>
<rect x="75" y="249" width="2" height="2" fill="#808080"/>
<rect x="77" y="250" width="1" height="1" fill="#008080"/>
<rect x="78" y="250" width="1" height="1" fill="#ff00ff"/>
<rect x="79" y="250" width="1" height="1" fill="#008080"/>
<rect x="79" y="251" width="1" height="1" fill="#ff0000"/>
<rect x="80" y="251" width="1" height="1" fill="#ff00ff"/>
<rect x="81" y="251" width="1" height="1" fill="#008080"/>
<rect x="82" y="251" width="2" height="1" fill="#808080"/>
<rect x="82" y="250" width="1" height="1" fill="#808080"/>
<rect x="83" y="250" width="1" height="1" fill="#008080"/>
<rect x="84" y="251" width="1" height="1" fill="#ff0000"/>
<rect x="85" y="250" width="1" height="1" fill="#ff00ff"/>
<rect x="86" y="249" width="1" height="1" fill="#ff0000"/>
<rect x="87" y="248" width="2" height="2" fill="#808080"/>
<rect x="76" y="283" width="2" height="2" fill="#808080"/>
<rect x="78" y="284" width="1" height="1" fill="#008080"/>
<rect x="79" y="284" width="1" height="1" fill="#ff00ff"/>
<rect x="80" y="284" width="1" height="1" fill="#008080"/>
<rect x="80" y="285" width="1" height="1" fill="#ff0000"/>
<rect x="81" y="285" width="1" height="1" fill="#ff00ff"/>
<rect x="82" y="285" width="1" height="1" fill="#008080"/>
<rect x="83" y="285" width="2" height="1" fill="#808080"/>
<rect x="83" y="284" width="1" height="1" fill="#808080"/>
<rect x="84" y="284" width="1" height="1" fill="#008080"/>
<rect x="85" y="285" width="1" height="1" fill="#ff0000"/>
<rect x="86" y="284" width="1" height="1" fill="#ff00ff"/>
<rect x="87" y="283" width="1" height="1" fill="#ff0000"/>
<rect x="88" y="282" width="2" height="2" fill="#808080"/>
<rect x="76" y="317" width="2" height="2" fill="#808080"/>
<rect x="78" y="318" width="1" height="1" fill="#008080"/>
<rect x="79" y="318" width="1" height="1" fill="#ff00ff"/>
<rect x="80" y="318" width="1" height="1" fill="#008080"/>
<rect x="80" y="319" width="1" height="1" fill="#ff0000"/>
<rect x="81" y="319" width="1" height="1" fill="#ff00ff"/>
<rect x="82" y="319" width="1" height="1" fill="#008080"/>
<rect x="83" y="319" width="2" height="1" fill="#808080"/>
<rect x="83" y="318" width="1" height="1" fill="#808080"/>
<rect x="84" y="318" width="1" height="1" fill="#008080"/>
<rect x="85" y="319" width="1" height="1" fill="#ff0000"/>
<rect x="86" y="318" width="1" height="1" fill="#ff00ff"/>
<rect x="87" y="317" width="1" height="1" fill="#ff0000"/>
<rect x="88" y="316" width="2" height="2" fill="#808080"/>
<rect x="77" y="351" width="2" height="2" fill="#808080"/>
<rect x="79" y="352" width="1" height="1" fill="#008080"/>
<rect x="80" y="352" width="1" height="1" fill="#ff00ff"/>
<rect x="81" y="352" width="1" height="1" fill="#008080"/>
<rect x="81" y="353" width="1" height="1" fill="#ff0000"/>
<rect x="82" y="353" width="1" height="1" fill="#ff00ff"/>
<rect x="83" y="353" width="1" height="1" fill="#008080"/>
<rect x="84" y="353" width="2" height="1" fill="#808080"/>
<rect x="84" y="352" width="1" height="1" fill="#808080"/>
<rect x="85" y="352" width="1" height="1" fill="#008080"/>
<rect x="86" y="353" width="1" height="1" fill="#ff0000"/>
<rect x="87" y="352" width="1" height="1" fill="#ff00ff"/>
<rect x="88" y="351" width="1" height="1" fill="#ff0000"/>
<rect x="89" y="350" width="2" height="2" fill="#808080"/>
<line x1="133.5" y1="155.0" x2="133.7" y2="167.0" stroke="#00ff00" stroke-width="1" />
<line x1="133.7" y1="167.0" x2="134.3" y2="220.0" stroke="#800000" stroke-width="1" />
<line x1="134.3" y1="220.0" x2="137.5" y2="470.0" stroke="#0000ff" stroke-width="1" />
<polyline points="116.5,153.0 121.0,166.5 128.5,193.5 134.5,214.6 140.5,231.0 142.0,264.0 143.5,273.0 137.5,300.0 137.5,330.0" fill="none" stroke="#ff0000" stroke-width="1" />
<rect x="132" y="166" width="2" height="2" fill="#808080"/>
<rect x="132" y="192" width="2" height="2" fill="#808080"/>
<rect x="134" y="219" width="2" height="2" fill="#808080"/>
<line x1="121.0" y1="166.5" x2="133.5" y2="166.5" stroke="#ff0000" stroke-width="1" />
<line x1="128.5" y1="193.5" x2="134.0" y2="193.5" stroke="#ff0000" stroke-width="1" />
<line x1="136.0" y1="231.0" x2="140.5" y2="231.0" stroke="#ff0000" stroke-width="1" />
<line x1="136.0" y1="266.0" x2="142.0" y2="266.0" stroke="#ff0000" stroke-width="1" />
<rect x="127" y="231" width="2" height="2" fill="#808080"/>
<rect x="129" y="232" width="1" height="1" fill="#008080"/>
<rect x="130" y="232" width="1" height="1" fill="#ff00ff"/>
<rect x="131" y="232" width="1" height="1" fill="#008080"/>
<rect x="131" y="233" width="1" height="1" fill="#ff0000"/>
<rect x="132" y="233" width="1" height="1" fill="#ff00ff"/>
<rect x="133" y="233" width="1" height="1" fill="#008080"/>
<rect x="134" y="233" width="2" height="1" fill="#808080"/>
<rect x="134" y="232" width="1" height="1" fill="#808080"/>
<rect x="135" y="232" width="1" height="1" fill="#008080"/>
<rect x="136" y="233" width="1" height="1" fill="#ff0000"/>
<rect x="137" y="232" width="1" height="1" fill="#ff00ff"/>
<rect x="138" y="231" width="1" height="1" fill="#ff0000"/>
<rect x="139" y="230" width="2" height="2" fill="#808080"/>
<rect x="127" y="265" width="2" height="2" fill="#808080"/>
<rect x="129" y="266" width="1" height="1" fill="#008080"/>
<rect x="130" y="266" width="1" height="1" fill="#ff00ff"/>
<rect x="131" y="266" width="1" height="1" fill="#008080"/>
<rect x="131" y="267" width="1" height="1" fill="#ff0000"/>
<rect x="132" y="267" width="1" height="1" fill="#ff00ff"/>
<rect x="133" y="267" width="1" height="1" fill="#008080"/>
<rect x="134" y="267" width="2" height="1" fill="#808080"/>
<rect x="134" y="266" width="1" height="1" fill="#808080"/>
<rect x="135" y="266" width="1" height="1" fill="#008080"/>
<rect x="136" y="267" width="1" height="1" fill="#ff0000"/>
<rect x="137" y="266" width="1" height="1" fill="#ff00ff"/>
<rect x="138" y="265" width="1" height="1" fill="#ff0000"/>
<rect x="139" y="264" width="2" height="2" fill="#808080"/>
<rect x="128" y="298" width="2" height="2" fill="#808080"/>
<rect x="130" y="299" width="1" height="1" fill="#008080"/>
<rect x="131" y="299" width="1" height="1" fill="#ff00ff"/>
<rect x="132" y="299" width="1" height="1" fill="#008080"/>
<rect x="132" y="300" width="1" height="1" fill="#ff0000"/>
<rect x="133" y="300" width="1" height="1" fill="#ff00ff"/>
<rect x="134" y="300" width="1" height="1" fill="#008080"/>
<rect x="135" y="300" width="2" height="1" fill="#808080"/>
<rect x="135" y="299" width="1" height="1" fill="#808080"/>
<rect x="136" y="299" width="1" height="1" fill="#008080"/>
<rect x="137" y="300" width="1" height="1" fill="#ff0000"/>
<rect x="138" y="299" width="1" height="1" fill="#ff00ff"/>
<rect x="139" y="298" width="1" height="1" fill="#ff0000"/>
<rect x="140" y="297" width="2" height="2" fill="#808080"/>
<rect x="128" y="332" width="2" height="2" fill="#808080"/>
<rect x="130" y="333" width="1" height="1" fill="#008080"/>
<rect x="131" y="333" width="1" height="1" fill="#ff00ff"/>
<rect x="132" y="333" width="1" height="1" fill="#008080"/>
<rect x="132" y="334" width="1" height="1" fill="#ff0000"/>
<rect x="133" y="334" width="1" height="1" fill="#ff00ff"/>
<rect x="134" y="334" width="1" height="1" fill="#008080"/>
<rect x="135" y="334" width="2" height="1" fill="#808080"/>
<rect x="135" y="333" width="1" height="1" fill="#808080"/>
<rect x="136" y="333" width="1" height="1" fill="#008080"/>
<rect x="137" y="334" width="1" height="1" fill="#ff0000"/>
<rect x="138" y="333" width="1" height="1" fill="#ff00ff"/>
<rect x="139" y="332" width="1" height="1" fill="#ff0000"/>
<rect x="140" y="331" width="2" height="2" fill="#808080"/>
<rect x="129" y="366" width="2" height="2" fill="#808080"/>
<rect x="131" y="367" width="1" height="1" fill="#008080"/>
<rect x="132" y="367" width="1" height="1" fill="#ff00ff"/>
<rect x="133" y="367" width="1" height="1" fill="#008080"/>
<rect x="133" y="368" width="1" height="1" fill="#ff0000"/>
<rect x="134" y="368" width="1" height="1" fill="#ff00ff"/>
<rect x="135" y="368" width="1" height="1" fill="#008080"/>
<rect x="136" y="368" width="2" height="1" fill="#808080"/>
<rect x="136" y="367" width="1" height="1" fill="#808080"/>
<rect x="137" y="367" width="1" height="1" fill="#008080"/>
<rect x="138" y="368" width="1" height="1" fill="#ff0000"/>
<rect x="139" y="367" width="1" height="1" fill="#ff00ff"/>
<rect x="140" y="366" width="1" height="1" fill="#ff0000"/>
<rect x="141" y="365" width="2" height="2" fill="#808080"/>
<rect x="129" y="401" width="2" height="2" fill="#808080"/>
<rect x="131" y="402" width="1" height="1" fill="#008080"/>
<rect x="132" y="402" width="1" height="1" fill="#ff00ff"/>
<rect x="133" y="402" width="1" height="1" fill="#008080"/>
<rect x="133" y="403" width="1" height="1" fill="#ff0000"/>
<rect x="134" y="403" width="1" height="1" fill="#ff00ff"/>
<rect x="135" y="403" width="1" height="1" fill="#008080"/>
<rect x="136" y="403" width="2" height="1" fill="#808080"/>
<rect x="136" y="402" width="1" height="1" fill="#808080"/>
<rect x="137" y="402" width="1" height="1" fill="#008080"/>
<rect x="138" y="403" width="1" height="1" fill="#ff0000"/>
<rect x="139" y="402" width="1" height="1" fill="#ff00ff"/>
<rect x="140" y="401" width="1" height="1" fill="#ff0000"/>
<rect x="141" y="400" width="2" height="2" fill="#808080"/>
<rect x="130" y="435" width="2" height="2" fill="#808080"/>
<rect x="132" y="436" width="1" height="1" fill="#008080"/>
<rect x="133" y="436" width="1" height="1" fill="#ff00ff"/>
<rect x="134" y="436" width="1" height="1" fill="#008080"/>
<rect x="134" y="437" width="1" height="1" fill="#ff0000"/>
<rect x="135" y="437" width="1" height="1" fill="#ff00ff"/>
<rect x="136" y="437" width="1" height="1" fill="#008080"/>
<rect x="137" y="437" width="2" height="1" fill="#808080"/>
<rect x="137" y="436" width="1" height="1" fill="#808080"/>
<rect x="138" y="436" width="1" height="1" fill="#008080"/>
<rect x="139" y="437" width="1" height="1" fill="#ff0000"/>
<rect x="140" y="436" width="1" height="1" fill="#ff00ff"/>
<rect x="141" y="435" width="1" height="1" fill="#ff0000"/>
<rect x="142" y="434" width="2" height="2" fill="#808080"/>
<rect x="130" y="469" width="2" height="2" fill="#808080"/>
<rect x="132" y="470" width="1" height="1" fill="#008080"/>
<rect x="133" y="470" width="1" height="1" fill="#ff00ff"/>
<rect x="134" y="470" width="1" height="1" fill="#008080"/>
<rect x="134" y="471" width="1" height="1" fill="#ff0000"/>
<rect x="135" y="471" width="1" height="1" fill="#ff00ff"/>
<rect x="136" y="471" width="1" height="1" fill="#008080"/>
<rect x="137" y="471" width="2" height="1" fill="#808080"/>
<rect x="137" y="470" width="1" height="1" fill="#808080"/>
<rect x="138" y="470" width="1" height="1" fill="#008080"/>
<rect x="139" y="471" width="1" height="1" fill="#ff0000"/>
<rect x="140" y="470" width="1" height="1" fill="#ff00ff"/>
<rect x="141" y="469" width="1" height="1" fill="#ff0000"/>
<rect x="142" y="468" width="2" height="2" fill="#808080"/>
<line x1="191.0" y1="165.0" x2="191.3" y2="193.0" stroke="#800000" stroke-width="1" />
<line x1="191.3" y1="193.0" x2="194.1" y2="444.0" stroke="#0000ff" stroke-width="1" />
<polyline points="186.5,163.0 195.5,203.5 195.5,244.0 194.0,292.0" fill="none" stroke="#ff0000" stroke-width="1" />
<rect x="190" y="178" width="2" height="2" fill="#808080"/>
<rect x="190" y="192" width="2" height="2" fill="#808080"/>
<line x1="192.0" y1="205.0" x2="195.5" y2="205.0" stroke="#ff0000" stroke-width="1" />
<line x1="192.0" y1="241.0" x2="195.5" y2="241.0" stroke="#ff0000" stroke-width="1" />
<rect x="184" y="204" width="2" height="2" fill="#808080"/>
<rect x="186" y="205" width="1" height="1" fill="#008080"/>
<rect x="187" y="205" width="1" height="1" fill="#ff00ff"/>
<rect x="188" y="205" width="1" height="1" fill="#008080"/>
<rect x="188" y="206" width="1" height="1" fill="#ff0000"/>
<rect x="189" y="206" width="1" height="1" fill="#ff00ff"/>
<rect x="190" y="206" width="1" height="1" fill="#008080"/>
<rect x="191" y="206" width="2" height="1" fill="#808080"/>
<rect x="191" y="205" width="1" height="1" fill="#808080"/>
<rect x="192" y="205" width="1" height="1" fill="#008080"/>
<rect x="193" y="206" width="1" height="1" fill="#ff0000"/>
<rect x="194" y="205" width="1" height="1" fill="#ff00ff"/>
<rect x="195" y="204" width="1" height="1" fill="#ff0000"/>
<rect x="196" y="203" width="2" height="2" fill="#808080"/>
<rect x="184" y="240" width="2" height="2" fill="#808080"/>
<rect x="186" y="241" width="1" height="1" fill="#008080"/>
<rect x="187" y="241" width="1" height="1" fill="#ff00ff"/>
<rect x="188" y="241" width="1" height="1" fill="#008080"/>
<rect x="188" y="242" width="1" height="1" fill="#ff0000"/>
<rect x="189" y="242" width="1" height="1" fill="#ff00ff"/>
<rect x="190" y="242" width="1" height="1" fill="#008080"/>
<rect x="191" y="242" width="2" height="1" fill="#808080"/>
<rect x="191" y="241" width="1" height="1" fill="#808080"/>
<rect x="192" y="241" width="1" height="1" fill="#008080"/>
<rect x="193" y="242" width="1" height="1" fill="#ff0000"/>
<rect x="194" y="241" width="1" height="1" fill="#ff00ff"/>
<rect x="195" y="240" width="1" height="1" fill="#ff0000"/>
<rect x="196" y="239" width="2" height="2" fill="#808080"/>
<rect x="185" y="273" width="2" height="2" fill="#808080"/>
<rect x="187" y="274" width="1" height="1" fill="#008080"/>
<rect x="188" y="274" width="1" height="1" fill="#ff00ff"/>
<rect x="189" y="274" width="1" height="1" fill="#008080"/>
<rect x="189" y="275" width="1" height="1" fill="#ff0000"/>
<rect x="190" y="275" width="1" height="1" fill="#ff00ff"/>
<rect x="191" y="275" width="1" height="1" fill="#008080"/>
<rect x="192" y="275" width="2" height="1" fill="#808080"/>
<rect x="192" y="274" width="1" height="1" fill="#808080"/>
<rect x="193" y="274" width="1" height="1" fill="#008080"/>
<rect x="194" y="275" width="1" height="1" fill="#ff0000"/>
<rect x="195" y="274" width="1" height="1" fill="#ff00ff"/>
<rect x="196" y="273" width="1" height="1" fill="#ff0000"/>
<rect x="197" y="272" width="2" height="2" fill="#808080"/>
<rect x="185" y="306" width="2" height="2" fill="#808080"/>
<rect x="187" y="307" width="1" height="1" fill="#008080"/>
<rect x="188" y="307" width="1" height="1" fill="#ff00ff"/>
<rect x="189" y="307" width="1" height="1" fill="#008080"/>
<rect x="189" y="308" width="1" height="1" fill="#ff0000"/>
<rect x="190" y="308" width="1" height="1" fill="#ff00ff"/>
<rect x="191" y="308" width="1" height="1" fill="#008080"/>
<rect x="192" y="308" width="2" height="1" fill="#808080"/>
<rect x="192" y="307" width="1" height="1" fill="#808080"/>
<rect x="193" y="307" width="1" height="1" fill="#008080"/>
<rect x="194" y="308" width="1" height="1" fill="#ff0000"/>
<rect x="195" y="307" width="1" height="1" fill="#ff00ff"/>
<rect x="196" y="306" width="1" height="1" fill="#ff0000"/>
<rect x="197" y="305" width="2" height="2" fill="#808080"/>
<rect x="185" y="341" width="2" height="2" fill="#808080"/>
<rect x="187" y="342" width="1" height="1" fill="#008080"/>
<rect x="188" y="342" width="1" height="1" fill="#ff00ff"/>
<rect x="189" y="342" width="1" height="1" fill="#008080"/>
<rect x="189" y="343" width="1" height="1" fill="#ff0000"/>
<rect x="190" y="343" width="1" height="1" fill="#ff00ff"/>
<rect x="191" y="343" width="1" height="1" fill="#008080"/>
<rect x="192" y="343" width="2" height="1" fill="#808080"/>
<rect x="192" y="342" width="1" height="1" fill="#808080"/>
<rect x="193" y="342" width="1" height="1" fill="#008080"/>
<rect x="194" y="343" width="1" height="1" fill="#ff0000"/>
<rect x="195" y="342" width="1" height="1" fill="#ff00ff"/>
<rect x="196" y="341" width="1" height="1" fill="#ff0000"/>
<rect x="197" y="340" width="2" height="2" fill="#808080"/>
<rect x="186" y="375" width="2" height="2" fill="#808080"/>
<rect x="188" y="376" width="1" height="1" fill="#008080"/>
<rect x="189" y="376" width="1" height="1" fill="#ff00ff"/>
<rect x="190" y="376" width="1" height="1" fill="#008080"/>
<rect x="190" y="377" width="1" height="1" fill="#ff0000"/>
<rect x="191" y="377" width="1" height="1" fill="#ff00ff"/>
<rect x="192" y="377" width="1" height="1" fill="#008080"/>
<rect x="193" y="377" width="2" height="1" fill="#808080"/>
<rect x="193" y="376" width="1" height="1" fill="#808080"/>
<rect x="194" y="376" width="1" height="1" fill="#008080"/>
<rect x="195" y="377" width="1" height="1" fill="#ff0000"/>
<rect x="196" y="376" width="1" height="1" fill="#ff00ff"/>
<rect x="197" y="375" width="1" height="1" fill="#ff0000"/>
<rect x="198" y="374" width="2" height="2" fill="#808080"/>
<rect x="186" y="409" width="2" height="2" fill="#808080"/>
<rect x="188" y="410" width="1" height="1" fill="#008080"/>
<rect x="189" y="410" width="1" height="1" fill="#ff00ff"/>
<rect x="190" y="410" width="1" height="1" fill="#008080"/>
<rect x="190" y="411" width="1" height="1" fill="#ff0000"/>
<rect x="191" y="411" width="1" height="1" fill="#ff00ff"/>
<rect x="192" y="411" width="1" height="1" fill="#008080"/>
<rect x="193" y="411" width="2" height="1" fill="#808080"/>
<rect x="193" y="410" width="1" height="1" fill="#808080"/>
<rect x="194" y="410" width="1" height="1" fill="#008080"/>
<rect x="195" y="411" width="1" height="1" fill="#ff0000"/>
<rect x="196" y="410" width="1" height="1" fill="#ff00ff"/>
<rect x="197" y="409" width="1" height="1" fill="#ff0000"/>
<rect x="198" y="408" width="2" height="2" fill="#808080"/>
<rect x="187" y="443" width="2" height="2" fill="#808080"/>
<rect x="189" y="444" width="1" height="1" fill="#008080"/>
<rect x="190" y="444" width="1" height="1" fill="#ff00ff"/>
<rect x="191" y="444" width="1" height="1" fill="#008080"/>
<rect x="191" y="445" width="1" height="1" fill="#ff0000"/>
<rect x="192" y="445" width="1" height="1" fill="#ff00ff"/>
<rect x="193" y="445" width="1" height="1" fill="#008080"/>
<rect x="194" y="445" width="2" height="1" fill="#808080"/>
<rect x="194" y="444" width="1" height="1" fill="#808080"/>
<rect x="195" y="444" width="1" height="1" fill="#008080"/>
<rect x="196" y="445" width="1" height="1" fill="#ff0000"/>
<rect x="197" y="444" width="1" height="1" fill="#ff00ff"/>
<rect x="198" y="443" width="1" height="1" fill="#ff0000"/>
<rect x="199" y="442" width="2" height="2" fill="#808080"/>
<line x1="409.3" y1="204.0" x2="409.5" y2="217.0" stroke="#00ff00" stroke-width="1" />
<line x1="409.5" y1="217.0" x2="410.3" y2="268.0" stroke="#800000" stroke-width="1" />
<line x1="410.3" y1="268.0" x2="414.0" y2="518.6" stroke="#0000ff" stroke-width="1" />
<polyline points="427.5,204.5 423.0,219.5 410.4,264.6 404.4,276.6 402.6,312.6 408.6,347.0 411.0,380.0" fill="none" stroke="#ff0000" stroke-width="1" />
<rect x="408" y="216" width="2" height="2" fill="#808080"/>
<rect x="408" y="242" width="2" height="2" fill="#808080"/>
<rect x="410" y="267" width="2" height="2" fill="#808080"/>
<line x1="410.0" y1="219.5" x2="423.0" y2="219.5" stroke="#ff0000" stroke-width="1" />
<line x1="410.0" y1="266.0" x2="410.4" y2="266.0" stroke="#ff0000" stroke-width="1" />
<line x1="404.4" y1="277.0" x2="411.0" y2="277.0" stroke="#ff0000" stroke-width="1" />
<line x1="402.6" y1="312.6" x2="411.0" y2="312.6" stroke="#ff0000" stroke-width="1" />
<line x1="408.6" y1="347.0" x2="411.5" y2="347.0" stroke="#ff0000" stroke-width="1" />
<rect x="403" y="279" width="2" height="2" fill="#808080"/>
<rect x="405" y="280" width="1" height="1" fill="#008080"/>
<rect x="406" y="280" width="1" height="1" fill="#ff00ff"/>
<rect x="407" y="280" width="1" height="1" fill="#008080"/>
<rect x="407" y="281" width="1" height="1" fill="#ff0000"/>
<rect x="408" y="281" width="1" height="1" fill="#ff00ff"/>
<rect x="409" y="281" width="1" height="1" fill="#008080"/>
<rect x="410" y="281" width="2" height="1" fill="#808080"/>
<rect x="410" y="280" width="1" height="1" fill="#808080"/>
<rect x="411" y="280" width="1" height="1" fill="#008080"/>
<rect x="412" y="281" width="1" height="1" fill="#ff0000"/>
<rect x="413" y="280" width="1" height="1" fill="#ff00ff"/>
<rect x="414" y="279" width="1" height="1" fill="#ff0000"/>
<rect x="415" y="278" width="2" height="2" fill="#808080"/>
<rect x="403" y="312" width="2" height="2" fill="#808080"/>
<rect x="405" y="313" width="1" height="1" fill="#008080"/>
<rect x="406" y="313" width="1" height="1" fill="#ff00ff"/>
<rect x="407" y="313" width="1" height="1" fill="#008080"/>
<rect x="407" y="314" width="1" height="1" fill="#ff0000"/>
<rect x="408" y="314" width="1" height="1" fill="#ff00ff"/>
<rect x="409" y="314" width="1" height="1" fill="#008080"/>
<rect x="410" y="314" width="2" height="1" fill="#808080"/>
<rect x="410" y="313" width="1" height="1" fill="#808080"/>
<rect x="411" y="313" width="1" height="1" fill="#008080"/>
<rect x="412" y="314" width="1" height="1" fill="#ff0000"/>
<rect x="413" y="313" width="1" height="1" fill="#ff00ff"/>
<rect x="414" y="312" width="1" height="1" fill="#ff0000"/>
<rect x="415" y="311" width="2" height="2" fill="#808080"/>
<rect x="404" y="347" width="2" height="2" fill="#808080"/>
<rect x="406" y="348" width="1" height="1" fill="#008080"/>
<rect x="407" y="348" width="1" height="1" fill="#ff00ff"/>
<rect x="408" y="348" width="1" height="1" fill="#008080"/>
<rect x="408" y="349" width="1" height="1" fill="#ff0000"/>
<rect x="409" y="349" width="1" height="1" fill="#ff00ff"/>
<rect x="410" y="349" width="1" height="1" fill="#008080"/>
<rect x="411" y="349" width="2" height="1" fill="#808080"/>
<rect x="411" y="348" width="1" height="1" fill="#808080"/>
<rect x="412" y="348" width="1" height="1" fill="#008080"/>
<rect x="413" y="349" width="1" height="1" fill="#ff0000"/>
<rect x="414" y="348" width="1" height="1" fill="#ff00ff"/>
<rect x="415" y="347" width="1" height="1" fill="#ff0000"/>
<rect x="416" y="346" width="2" height="2" fill="#808080"/>
<rect x="404" y="381" width="2" height="2" fill="#808080"/>
<rect x="406" y="382" width="1" height="1" fill="#008080"/>
<rect x="407" y="382" width="1" height="1" fill="#ff00ff"/>
<rect x="408" y="382" width="1" height="1" fill="#008080"/>
<rect x="408" y="383" width="1" height="1" fill="#ff0000"/>
<rect x="409" y="383" width="1" height="1" fill="#ff00ff"/>
<rect x="410" y="383" width="1" height="1" fill="#008080"/>
<rect x="411" y="383" width="2" height="1" fill="#808080"/>
<rect x="411" y="382" width="1" height="1" fill="#808080"/>
<rect x="412" y="382" width="1" height="1" fill="#008080"/>
<rect x="413" y="383" width="1" height="1" fill="#ff0000"/>
<rect x="414" y="382" width="1" height="1" fill="#ff00ff"/>
<rect x="415" y="381" width="1" height="1" fill="#ff0000"/>
<rect x="416" y="380" width="2" height="2" fill="#808080"/>
<rect x="405" y="415" width="2" height="2" fill="#808080"/>
<rect x="407" y="416" width="1" height="1" fill="#008080"/>
<rect x="408" y="416" width="1" height="1" fill="#ff00ff"/>
<rect x="409" y="416" width="1" height="1" fill="#008080"/>
<rect x="409" y="417" width="1" height="1" fill="#ff0000"/>
<rect x="410" y="417" width="1" height="1" fill="#ff00ff"/>
<rect x="411" y="417" width="1" height="1" fill="#008080"/>
<rect x="412" y="417" width="2" height="1" fill="#808080"/>
<rect x="412" y="416" width="1" height="1" fill="#808080"/>
<rect x="413" y="416" width="1" height="1" fill="#008080"/>
<rect x="414" y="417" width="1" height="1" fill="#ff0000"/>
<rect x="415" y="416" width="1" height="1" fill="#ff00ff"/>
<rect x="416" y="415" width="1" height="1" fill="#ff0000"/>
<rect x="417" y="414" width="2" height="2" fill="#808080"/>
<rect x="405" y="449" width="2" height="2" fill="#808080"/>
<rect x="407" y="450" width="1" height="1" fill="#008080"/>
<rect x="408" y="450" width="1" height="1" fill="#ff00ff"/>
<rect x="409" y="450" width="1" height="1" fill="#008080"/>
<rect x="409" y="451" width="1" height="1" fill="#ff0000"/>
<rect x="410" y="451" width="1" height="1" fill="#ff00ff"/>
<rect x="411" y="451" width="1" height="1" fill="#008080"/>
<rect x="412" y="451" width="2" height="1" fill="#808080"/>
<rect x="412" y="450" width="1" height="1" fill="#808080"/>
<rect x="413" y="450" width="1" height="1" fill="#008080"/>
<rect x="414" y="451" width="1" height="1" fill="#ff0000"/>
<rect x="415" y="450" width="1" height="1" fill="#ff00ff"/>
<rect x="416" y="449" width="1" height="1" fill="#ff0000"/>
<rect x="417" y="448" width="2" height="2" fill="#808080"/>
<rect x="406" y="483" width="2" height="2" fill="#808080"/>
<rect x="408" y="484" width="1" height="1" fill="#008080"/>
<rect x="409" y="484" width="1" height="1" fill="#ff00ff"/>
<rect x="410" y="484" width="1" height="1" fill="#008080"/>
<rect x="410" y="485" width="1" height="1" fill="#ff0000"/>
<rect x="411" y="485" width="1" height="1" fill="#ff00ff"/>
<rect x="412" y="485" width="1" height="1" fill="#008080"/>
<rect x="413" y="485" width="2" height="1" fill="#808080"/>
<rect x="413" y="484" width="1" height="1" fill="#808080"/>
<rect x="414" y="484" width="1" height="1" fill="#008080"/>
<rect x="415" y="485" width="1" height="1" fill="#ff0000"/>
<rect x="416" y="484" width="1" height="1" fill="#ff00ff"/>
<rect x="417" y="483" width="1" height="1" fill="#ff0000"/>
<rect x="418" y="482" width="2" height="2" fill="#808080"/>
<rect x="407" y="518" width="2" height="2" fill="#808080"/>
<rect x="409" y="519" width="1" height="1" fill="#008080"/>
<rect x="410" y="519" width="1" height="1" fill="#ff00ff"/>
<rect x="411" y="519" width="1" height="1" fill="#008080"/>
<rect x="411" y="520" width="1" height="1" fill="#ff0000"/>
<rect x="412" y="520" width="1" height="1" fill="#ff00ff"/>
<rect x="413" y="520" width="1" height="1" fill="#008080"/>
<rect x="414" y="520" width="2" height="1" fill="#808080"/>
<rect x="414" y="519" width="1" height="1" fill="#808080"/>
<rect x="415" y="519" width="1" height="1" fill="#008080"/>
<rect x="416" y="520" width="1" height="1" fill="#ff0000"/>
<rect x="417" y="519" width="1" height="1" fill="#ff00ff"/>
<rect x="418" y="518" width="1" height="1" fill="#ff0000"/>
<rect x="419" y="517" width="2" height="2" fill="#808080"/>
<line x1="466.7" y1="214.5" x2="467.1" y2="241.0" stroke="#800000" stroke-width="1" />
<line x1="467.1" y1="241.0" x2="470.7" y2="492.4" stroke="#0000ff" stroke-width="1" />
<polyline points="469.5,216.5 465.6,242.0 462.6,254.0 462.6,288.6 466.5,329.0 467.5,368.0" fill="none" stroke="#ff0000" stroke-width="1" />
<rect x="466" y="227" width="2" height="2" fill="#808080"/>
<rect x="466" y="240" width="2" height="2" fill="#808080"/>
<line x1="462.6" y1="254.0" x2="466.0" y2="254.0" stroke="#ff0000" stroke-width="1" />
<line x1="462.6" y1="288.6" x2="467.0" y2="288.6" stroke="#ff0000" stroke-width="1" />
<rect x="460" y="252" width="2" height="2" fill="#808080"/>
<rect x="462" y="253" width="1" height="1" fill="#008080"/>
<rect x="463" y="253" width="1" height="1" fill="#ff00ff"/>
<rect x="464" y="253" width="1" height="1" fill="#008080"/>
<rect x="464" y="254" width="1" height="1" fill="#ff0000"/>
<rect x="465" y="254" width="1" height="1" fill="#ff00ff"/>
<rect x="466" y="254" width="1" height="1" fill="#008080"/>
<rect x="467" y="254" width="2" height="1" fill="#808080"/>
<rect x="467" y="253" width="1" height="1" fill="#808080"/>
<rect x="468" y="253" width="1" height="1" fill="#008080"/>
<rect x="469" y="254" width="1" height="1" fill="#ff0000"/>
<rect x="470" y="253" width="1" height="1" fill="#ff00ff"/>
<rect x="471" y="252" width="1" height="1" fill="#ff0000"/>
<rect x="472" y="251" width="2" height="2" fill="#808080"/>
<rect x="460" y="287" width="2" height="2" fill="#808080"/>
<rect x="462" y="288" width="1" height="1" fill="#008080"/>
<rect x="463" y="288" width="1" height="1" fill="#ff00ff"/>
<rect x="464" y="288" width="1" height="1" fill="#008080"/>
<rect x="464" y="289" width="1" height="1" fill="#ff0000"/>
<rect x="465" y="289" width="1" height="1" fill="#ff00ff"/>
<rect x="466" y="289" width="1" height="1" fill="#008080"/>
<rect x="467" y="289" width="2" height="1" fill="#808080"/>
<rect x="467" y="288" width="1" height="1" fill="#808080"/>
<rect x="468" y="288" width="1" height="1" fill="#008080"/>
<rect x="469" y="289" width="1" height="1" fill="#ff0000"/>
<rect x="470" y="288" width="1" height="1" fill="#ff00ff"/>
<rect x="471" y="287" width="1" height="1" fill="#ff0000"/>
<rect x="472" y="286" width="2" height="2" fill="#808080"/>
<rect x="461" y="321" width="2" height="2" fill="#808080"/>
<rect x="463" y="322" width="1" height="1" fill="#008080"/>
<rect x="464" y="322" width="1" height="1" fill="#ff00ff"/>
<rect x="465" y="322" width="1" height="1" fill="#008080"/>
<rect x="465" y="323" width="1" height="1" fill="#ff0000"/>
<rect x="466" y="323" width="1" height="1" fill="#ff00ff"/>
<rect x="467" y="323" width="1" height="1" fill="#008080"/>
<rect x="468" y="323" width="2" height="1" fill="#808080"/>
<rect x="468" y="322" width="1" height="1" fill="#808080"/>
<rect x="469" y="322" width="1" height="1" fill="#008080"/>
<rect x="470" y="323" width="1" height="1" fill="#ff0000"/>
<rect x="471" y="322" width="1" height="1" fill="#ff00ff"/>
<rect x="472" y="321" width="1" height="1" fill="#ff0000"/>
<rect x="473" y="320" width="2" height="2" fill="#808080"/>
<rect x="461" y="355" width="2" height="2" fill="#808080"/>
<rect x="463" y="356" width="1" height="1" fill="#008080"/>
<rect x="464" y="356" width="1" height="1" fill="#ff00ff"/>
<rect x="465" y="356" width="1" height="1" fill="#008080"/>
<rect x="465" y="357" width="1" height="1" fill="#ff0000"/>
<rect x="466" y="357" width="1" height="1" fill="#ff00ff"/>
<rect x="467" y="357" width="1" height="1" fill="#008080"/>
<rect x="468" y="357" width="2" height="1" fill="#808080"/>
<rect x="468" y="356" width="1" height="1" fill="#808080"/>
<rect x="469" y="356" width="1" height="1" fill="#008080"/>
<rect x="470" y="357" width="1" height="1" fill="#ff0000"/>
<rect x="471" y="356" width="1" height="1" fill="#ff00ff"/>
<rect x="472" y="355" width="1" height="1" fill="#ff0000"/>
<rect x="473" y="354" width="2" height="2" fill="#808080"/>
<rect x="462" y="389" width="2" height="2" fill="#808080"/>
<rect x="464" y="390" width="1" height="1" fill="#008080"/>
<rect x="465" y="390" width="1" height="1" fill="#ff00ff"/>
<rect x="466" y="390" width="1" height="1" fill="#008080"/>
<rect x="466" y="391" width="1" height="1" fill="#ff0000"/>
<rect x="467" y="391" width="1" height="1" fill="#ff00ff"/>
<rect x="468" y="391" width="1" height="1" fill="#008080"/>
<rect x="469" y="391" width="2" height="1" fill="#808080"/>
<rect x="469" y="390" width="1" height="1" fill="#808080"/>
<rect x="470" y="390" width="1" height="1" fill="#008080"/>
<rect x="471" y="391" width="1" height="1" fill="#ff0000"/>
<rect x="472" y="390" width="1" height="1" fill="#ff00ff"/>
<rect x="473" y="389" width="1" height="1" fill="#ff0000"/>
<rect x="474" y="388" width="2" height="2" fill="#808080"/>
<rect x="462" y="423" width="2" height="2" fill="#808080"/>
<rect x="464" y="424" width="1" height="1" fill="#008080"/>
<rect x="465" y="424" width="1" height="1" fill="#ff00ff"/>
<rect x="466" y="424" width="1" height="1" fill="#008080"/>
<rect x="466" y="425" width="1" height="1" fill="#ff0000"/>
<rect x="467" y="425" width="1" height="1" fill="#ff00ff"/>
<rect x="468" y="425" width="1" height="1" fill="#008080"/>
<rect x="469" y="425" width="2" height="1" fill="#808080"/>
<rect x="469" y="424" width="1" height="1" fill="#808080"/>
<rect x="470" y="424" width="1" height="1" fill="#008080"/>
<rect x="471" y="425" width="1" height="1" fill="#ff0000"/>
<rect x="472" y="424" width="1" height="1" fill="#ff00ff"/>
<rect x="473" y="423" width="1" height="1" fill="#ff0000"/>
<rect x="474" y="422" width="2" height="2" fill="#808080"/>
<rect x="463" y="458" width="2" height="2" fill="#808080"/>
<rect x="465" y="459" width="1" height="1" fill="#008080"/>
<rect x="466" y="459" width="1" height="1" fill="#ff00ff"/>
<rect x="467" y="459" width="1" height="1" fill="#008080"/>
<rect x="467" y="460" width="1" height="1" fill="#ff0000"/>
<rect x="468" y="460" width="1" height="1" fill="#ff00ff"/>
<rect x="469" y="460" width="1" height="1" fill="#008080"/>
<rect x="470" y="460" width="2" height="1" fill="#808080"/>
<rect x="470" y="459" width="1" height="1" fill="#808080"/>
<rect x="471" y="459" width="1" height="1" fill="#008080"/>
<rect x="472" y="460" width="1" height="1" fill="#ff0000"/>
<rect x="473" y="459" width="1" height="1" fill="#ff00ff"/>
<rect x="474" y="458" width="1" height="1" fill="#ff0000"/>
<rect x="475" y="457" width="2" height="2" fill="#808080"/>
<rect x="463" y="491" width="2" height="2" fill="#808080"/>
<rect x="465" y="492" width="1" height="1" fill="#008080"/>
<rect x="466" y="492" width="1" height="1" fill="#ff00ff"/>
<rect x="467" y="492" width="1" height="1" fill="#008080"/>
<rect x="467" y="493" width="1" height="1" fill="#ff0000"/>
<rect x="468" y="493" width="1" height="1" fill="#ff00ff"/>
<rect x="469" y="493" width="1" height="1" fill="#008080"/>
<rect x="470" y="493" width="2" height="1" fill="#808080"/>
<rect x="470" y="492" width="1" height="1" fill="#808080"/>
<rect x="471" y="492" width="1" height="1" fill="#008080"/>
<rect x="472" y="493" width="1" height="1" fill="#ff0000"/>
<rect x="473" y="492" width="1" height="1" fill="#ff00ff"/>
<rect x="474" y="491" width="1" height="1" fill="#ff0000"/>
<rect x="475" y="490" width="2" height="2" fill="#808080"/>
<line x1="519.2" y1="223.5" x2="519.4" y2="236.0" stroke="#00ff00" stroke-width="1" />
<line x1="519.4" y1="236.0" x2="520.1" y2="288.0" stroke="#808080" stroke-width="1" />
<line x1="520.1" y1="288.0" x2="522.4" y2="465.0" stroke="#0000ff" stroke-width="1" />
<polyline points="510.0,220.0 513.8,236.2 518.8,285.0 522.5,350.0" fill="none" stroke="#ff0000" stroke-width="1" />
<rect x="518" y="235" width="2" height="2" fill="#808080"/>
<rect x="518" y="261" width="2" height="2" fill="#808080"/>
<rect x="520" y="287" width="2" height="2" fill="#808080"/>
<line x1="513.8" y1="236.0" x2="519.5" y2="236.0" stroke="#ff0000" stroke-width="1" />
<line x1="516.0" y1="262.0" x2="520.0" y2="262.0" stroke="#ff0000" stroke-width="1" />
<rect x="513" y="293" width="2" height="2" fill="#808080"/>
<rect x="515" y="294" width="1" height="1" fill="#008080"/>
<rect x="516" y="294" width="1" height="1" fill="#ff00ff"/>
<rect x="517" y="294" width="1" height="1" fill="#008080"/>
<rect x="517" y="295" width="1" height="1" fill="#ff0000"/>
<rect x="518" y="295" width="1" height="1" fill="#ff00ff"/>
<rect x="519" y="295" width="1" height="1" fill="#008080"/>
<rect x="520" y="295" width="2" height="1" fill="#808080"/>
<rect x="520" y="294" width="1" height="1" fill="#808080"/>
<rect x="521" y="294" width="1" height="1" fill="#008080"/>
<rect x="522" y="295" width="1" height="1" fill="#ff0000"/>
<rect x="523" y="294" width="1" height="1" fill="#ff00ff"/>
<rect x="524" y="293" width="1" height="1" fill="#ff0000"/>
<rect x="525" y="292" width="2" height="2" fill="#808080"/>
<rect x="513" y="328" width="2" height="2" fill="#808080"/>
<rect x="515" y="329" width="1" height="1" fill="#008080"/>
<rect x="516" y="329" width="1" height="1" fill="#ff00ff"/>
<rect x="517" y="329" width="1" height="1" fill="#008080"/>
<rect x="517" y="330" width="1" height="1" fill="#ff0000"/>
<rect x="518" y="330" width="1" height="1" fill="#ff00ff"/>
<rect x="519" y="330" width="1" height="1" fill="#008080"/>
<rect x="520" y="330" width="2" height="1" fill="#808080"/>
<rect x="520" y="329" width="1" height="1" fill="#808080"/>
<rect x="521" y="329" width="1" height="1" fill="#008080"/>
<rect x="522" y="330" width="1" height="1" fill="#ff0000"/>
<rect x="523" y="329" width="1" height="1" fill="#ff00ff"/>
<rect x="524" y="328" width="1" height="1" fill="#ff0000"/>
<rect x="525" y="327" width="2" height="2" fill="#808080"/>
<rect x="514" y="362" width="2" height="2" fill="#808080"/>
<rect x="516" y="363" width="1" height="1" fill="#008080"/>
<rect x="517" y="363" width="1" height="1" fill="#ff00ff"/>
<rect x="518" y="363" width="1" height="1" fill="#008080"/>
<rect x="518" y="364" width="1" height="1" fill="#ff0000"/>
<rect x="519" y="364" width="1" height="1" fill="#ff00ff"/>
<rect x="520" y="364" width="1" height="1" fill="#008080"/>
<rect x="521" y="364" width="2" height="1" fill="#808080"/>
<rect x="521" y="363" width="1" height="1" fill="#808080"/>
<rect x="522" y="363" width="1" height="1" fill="#008080"/>
<rect x="523" y="364" width="1" height="1" fill="#ff0000"/>
<rect x="524" y="363" width="1" height="1" fill="#ff00ff"/>
<rect x="525" y="362" width="1" height="1" fill="#ff0000"/>
<rect x="526" y="361" width="2" height="2" fill="#808080"/>
<rect x="514" y="396" width="2" height="2" fill="#808080"/>
<rect x="516" y="397" width="1" height="1" fill="#008080"/>
<rect x="517" y="397" width="1" height="1" fill="#ff00ff"/>
<rect x="518" y="397" width="1" height="1" fill="#008080"/>
<rect x="518" y="398" width="1" height="1" fill="#ff0000"/>
<rect x="519" y="398" width="1" height="1" fill="#ff00ff"/>
<rect x="520" y="398" width="1" height="1" fill="#008080"/>
<rect x="521" y="398" width="2" height="1" fill="#808080"/>
<rect x="521" y="397" width="1" height="1" fill="#808080"/>
<rect x="522" y="397" width="1" height="1" fill="#008080"/>
<rect x="523" y="398" width="1" height="1" fill="#ff0000"/>
<rect x="524" y="397" width="1" height="1" fill="#ff00ff"/>
<rect x="525" y="396" width="1" height="1" fill="#ff0000"/>
<rect x="526" y="395" width="2" height="2" fill="#808080"/>
<rect x="514" y="430" width="2" height="2" fill="#808080"/>
<rect x="516" y="431" width="1" height="1" fill="#008080"/>
<rect x="517" y="431" width="1" height="1" fill="#ff00ff"/>
<rect x="518" y="431" width="1" height="1" fill="#008080"/>
<rect x="518" y="432" width="1" height="1" fill="#ff0000"/>
<rect x="519" y="432" width="1" height="1" fill="#ff00ff"/>
<rect x="520" y="432" width="1" height="1" fill="#008080"/>
<rect x="521" y="432" width="2" height="1" fill="#808080"/>
<rect x="521" y="431" width="1" height="1" fill="#808080"/>
<rect x="522" y="431" width="1" height="1" fill="#008080"/>
<rect x="523" y="432" width="1" height="1" fill="#ff0000"/>
<rect x="524" y="431" width="1" height="1" fill="#ff00ff"/>
<rect x="525" y="430" width="1" height="1" fill="#ff0000"/>
<rect x="526" y="429" width="2" height="2" fill="#808080"/>
<rect x="515" y="464" width="2" height="2" fill="#808080"/>
<rect x="517" y="465" width="1" height="1" fill="#008080"/>
<rect x="518" y="465" width="1" height="1" fill="#ff00ff"/>
<rect x="519" y="465" width="1" height="1" fill="#008080"/>
<rect x="519" y="466" width="1" height="1" fill="#ff0000"/>
<rect x="520" y="466" width="1" height="1" fill="#ff00ff"/>
<rect x="521" y="466" width="1" height="1" fill="#008080"/>
<rect x="522" y="466" width="2" height="1" fill="#808080"/>
<rect x="522" y="465" width="1" height="1" fill="#808080"/>
<rect x="523" y="465" width="1" height="1" fill="#008080"/>
<rect x="524" y="466" width="1" height="1" fill="#ff0000"/>
<rect x="525" y="465" width="1" height="1" fill="#ff00ff"/>
<rect x="526" y="464" width="1" height="1" fill="#ff0000"/>
<rect x="527" y="463" width="2" height="2" fill="#808080"/>
<line x1="576.8" y1="197.0" x2="576.9" y2="211.0" stroke="#00ff00" stroke-width="1" />
<line x1="576.9" y1="211.0" x2="577.5" y2="263.0" stroke="#808080" stroke-width="1" />
<line x1="577.5" y1="263.0" x2="579.4" y2="440.0" stroke="#0000ff" stroke-width="1" />
<polyline points="572.5,203.8 575.0,236.0 576.2,253.8 579.5,260.0 580.0,350.0" fill="none" stroke="#ff0000" stroke-width="1" />
<rect x="576" y="210" width="2" height="2" fill="#808080"/>
<rect x="576" y="236" width="2" height="2" fill="#808080"/>
<rect x="576" y="262" width="2" height="2" fill="#808080"/>
<line x1="575.0" y1="236.0" x2="577.0" y2="236.0" stroke="#ff0000" stroke-width="1" />
<rect x="570" y="268" width="2" height="2" fill="#808080"/>
<rect x="572" y="269" width="1" height="1" fill="#008080"/>
<rect x="573" y="269" width="1" height="1" fill="#ff00ff"/>
<rect x="574" y="269" width="1" height="1" fill="#008080"/>
<rect x="574" y="270" width="1" height="1" fill="#ff0000"/>
<rect x="575" y="270" width="1" height="1" fill="#ff00ff"/>
<rect x="576" y="270" width="1" height="1" fill="#008080"/>
<rect x="577" y="270" width="2" height="1" fill="#808080"/>
<rect x="577" y="269" width="1" height="1" fill="#808080"/>
<rect x="578" y="269" width="1" height="1" fill="#008080"/>
<rect x="579" y="270" width="1" height="1" fill="#ff0000"/>
<rect x="580" y="269" width="1" height="1" fill="#ff00ff"/>
<rect x="581" y="268" width="1" height="1" fill="#ff0000"/>
<rect x="582" y="267" width="2" height="2" fill="#808080"/>
<rect x="570" y="302" width="2" height="2" fill="#808080"/>
<rect x="572" y="303" width="1" height="1" fill="#008080"/>
<rect x="573" y="303" width="1" height="1" fill="#ff00ff"/>
<rect x="574" y="303" width="1" height="1" fill="#008080"/>
<rect x="574" y="304" width="1" height="1" fill="#ff0000"/>
<rect x="575" y="304" width="1" height="1" fill="#ff00ff"/>
<rect x="576" y="304" width="1" height="1" fill="#008080"/>
<rect x="577" y="304" width="2" height="1" fill="#808080"/>
<rect x="577" y="303" width="1" height="1" fill="#808080"/>
<rect x="578" y="303" width="1" height="1" fill="#008080"/>
<rect x="579" y="304" width="1" height="1" fill="#ff0000"/>
<rect x="580" y="303" width="1" height="1" fill="#ff00ff"/>
<rect x="581" y="302" width="1" height="1" fill="#ff0000"/>
<rect x="582" y="301" width="2" height="2" fill="#808080"/>
<rect x="571" y="336" width="2" height="2" fill="#808080"/>
<rect x="573" y="337" width="1" height="1" fill="#008080"/>
<rect x="574" y="337" width="1" height="1" fill="#ff00ff"/>
<rect x="575" y="337" width="1" height="1" fill="#008080"/>
<rect x="575" y="338" width="1" height="1" fill="#ff0000"/>
<rect x="576" y="338" width="1" height="1" fill="#ff00ff"/>
<rect x="577" y="338" width="1" height="1" fill="#008080"/>
<rect x="578" y="338" width="2" height="1" fill="#808080"/>
<rect x="578" y="337" width="1" height="1" fill="#808080"/>
<rect x="579" y="337" width="1" height="1" fill="#008080"/>
<rect x="580" y="338" width="1" height="1" fill="#ff0000"/>
<rect x="581" y="337" width="1" height="1" fill="#ff00ff"/>
<rect x="582" y="336" width="1" height="1" fill="#ff0000"/>
<rect x="583" y="335" width="2" height="2" fill="#808080"/>
<rect x="571" y="370" width="2" height="2" fill="#808080"/>
<rect x="573" y="371" width="1" height="1" fill="#008080"/>
<rect x="574" y="371" width="1" height="1" fill="#ff00ff"/>
<rect x="575" y="371" width="1" height="1" fill="#008080"/>
<rect x="575" y="372" width="1" height="1" fill="#ff0000"/>
<rect x="576" y="372" width="1" height="1" fill="#ff00ff"/>
<rect x="577" y="372" width="1" height="1" fill="#008080"/>
<rect x="578" y="372" width="2" height="1" fill="#808080"/>
<rect x="578" y="371" width="1" height="1" fill="#808080"/>
<rect x="579" y="371" width="1" height="1" fill="#008080"/>
<rect x="580" y="372" width="1" height="1" fill="#ff0000"/>
<rect x="581" y="371" width="1" height="1" fill="#ff00ff"/>
<rect x="582" y="370" width="1" height="1" fill="#ff0000"/>
<rect x="583" y="369" width="2" height="2" fill="#808080"/>
<rect x="572" y="404" width="2" height="2" fill="#808080"/>
<rect x="574" y="405" width="1" height="1" fill="#008080"/>
<rect x="575" y="405" width="1" height="1" fill="#ff00ff"/>
<rect x="576" y="405" width="1" height="1" fill="#008080"/>
<rect x="576" y="406" width="1" height="1" fill="#ff0000"/>
<rect x="577" y="406" width="1" height="1" fill="#ff00ff"/>
<rect x="578" y="406" width="1" height="1" fill="#008080"/>
<rect x="579" y="406" width="2" height="1" fill="#808080"/>
<rect x="579" y="405" width="1" height="1" fill="#808080"/>
<rect x="580" y="405" width="1" height="1" fill="#008080"/>
<rect x="581" y="406" width="1" height="1" fill="#ff0000"/>
<rect x="582" y="405" width="1" height="1" fill="#ff00ff"/>
<rect x="583" y="404" width="1" height="1" fill="#ff0000"/>
<rect x="584" y="403" width="2" height="2" fill="#808080"/>
<rect x="572" y="439" width="2" height="2" fill="#808080"/>
<rect x="574" y="440" width="1" height="1" fill="#008080"/>
<rect x="575" y="440" width="1" height="1" fill="#ff00ff"/>
<rect x="576" y="440" width="1" height="1" fill="#008080"/>
<rect x="576" y="441" width="1" height="1" fill="#ff0000"/>
<rect x="577" y="441" width="1" height="1" fill="#ff00ff"/>
<rect x="578" y="441" width="1" height="1" fill="#008080"/>
<rect x="579" y="441" width="2" height="1" fill="#808080"/>
<rect x="579" y="440" width="1" height="1" fill="#808080"/>
<rect x="580" y="440" width="1" height="1" fill="#008080"/>
<rect x="581" y="441" width="1" height="1" fill="#ff0000"/>
<rect x="582" y="440" width="1" height="1" fill="#ff00ff"/>
<rect x="583" y="439" width="1" height="1" fill="#ff0000"/>
<rect x="584" y="438" width="2" height="2" fill="#808080"/>
</svg>
</body></html>
